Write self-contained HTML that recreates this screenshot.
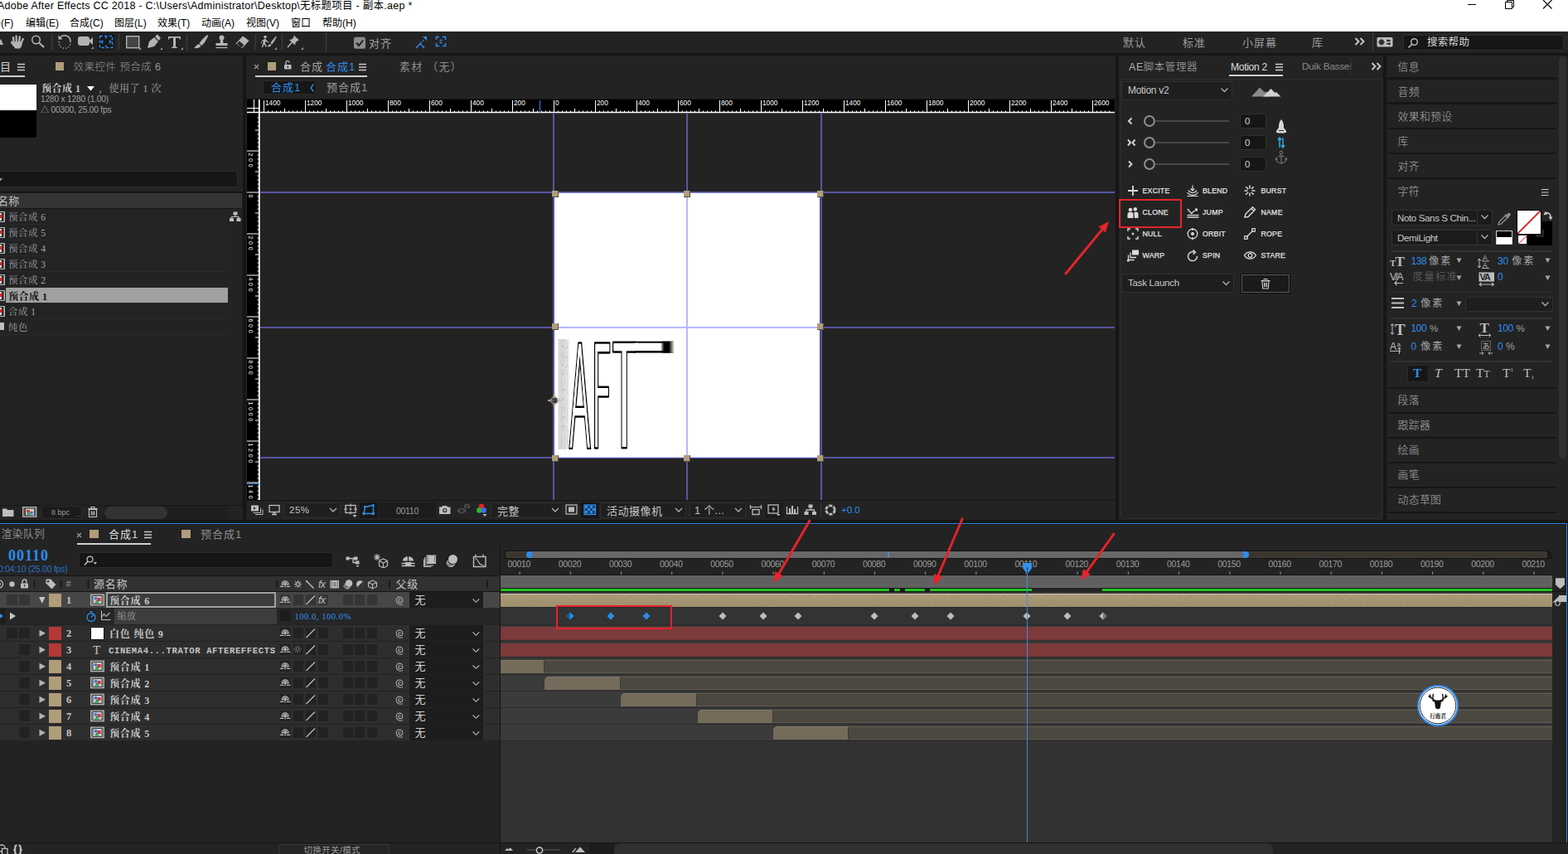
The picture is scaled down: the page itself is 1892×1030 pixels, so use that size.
<!DOCTYPE html>
<html lang="zh-CN"><head><meta charset="utf-8"><title>Adobe After Effects CC 2018</title>
<style>
html,body{margin:0;padding:0;background:#232323;}
#root{position:relative;width:1892px;height:1030px;overflow:hidden;background:#161616;font-family:"Liberation Sans","Noto Sans CJK SC",sans-serif;}
#root div,#root svg{position:absolute;box-sizing:border-box;}
#root .t{white-space:nowrap;line-height:1;}
#root .s{font-family:"Liberation Serif","Noto Serif CJK SC",serif;}
#root .m{font-family:"Liberation Mono","Noto Sans CJK SC",monospace;}
</style></head>
<body><div id="root">
<div style="left:0px;top:0px;width:1892px;height:38px;background:#ffffff;"></div>
<div class="t" style="left:-3px;top:1px;font-size:12.5px;color:#000;line-height:13px;letter-spacing:0.260px;">Adobe After Effects CC 2018 - C:\Users\Administrator\Desktop\无标题项目 - 副本.aep *</div>
<div class="t" style="left:-11px;top:21px;font-size:12px;color:#000;line-height:14px;">件(F)</div>
<div class="t" style="left:31px;top:21px;font-size:12px;color:#000;line-height:14px;">编辑(E)</div>
<div class="t" style="left:84px;top:21px;font-size:12px;color:#000;line-height:14px;">合成(C)</div>
<div class="t" style="left:138px;top:21px;font-size:12px;color:#000;line-height:14px;">图层(L)</div>
<div class="t" style="left:190px;top:21px;font-size:12px;color:#000;line-height:14px;">效果(T)</div>
<div class="t" style="left:243px;top:21px;font-size:12px;color:#000;line-height:14px;">动画(A)</div>
<div class="t" style="left:297px;top:21px;font-size:12px;color:#000;line-height:14px;">视图(V)</div>
<div class="t" style="left:351px;top:21px;font-size:12px;color:#000;line-height:14px;">窗口</div>
<div class="t" style="left:389px;top:21px;font-size:12px;color:#000;line-height:14px;">帮助(H)</div>
<svg style="left:1765px;top:0px;" width="120" height="14" viewBox="0 0 120 14"><path d="M6 5.5H16" stroke="#000" stroke-width="1" fill="none"/><path d="M51.5 2.5H59.5V10.5H51.5Z M53.5 2.5V0.5H61.5V8.5H59.5" stroke="#000" stroke-width="1" fill="none"/><path d="M97 0L107.5 10.5M107.5 0L97 10.5" stroke="#000" stroke-width="1.1" fill="none"/></svg>
<div style="left:0px;top:38px;width:1892px;height:25.5px;background:#232323;"></div>
<svg style="left:0px;top:36.2px;" width="560" height="28" viewBox="0 0 560 28"><path d="M-4 18L1 11L4 18Z" fill="#b4b4b4"/><path d="M16.600 15L15.900 9.200M19.800 14L19.600 7.700M23 14L23.900 8.300M25.700 15.500L27.800 11M16.500 18.500L14 14.800" stroke="#b4b4b4" stroke-width="2.300" stroke-linecap="round" fill="none"/><path d="M15.400 14.200h10.800l.6 1.600c0 3.200-1.300 5.400-2.800 6.700h-5.400c-1.700-1.600-3.200-4.300-3.200-8.300z" fill="#b4b4b4"/><circle cx="43.500" cy="12" r="4.800" fill="none" stroke="#b4b4b4" stroke-width="1.500"/><path d="M47 15.500L53 21" stroke="#b4b4b4" stroke-width="2"/><path d="M62.5 5V24" stroke="#3a3a3a" stroke-width="1.500"/><path d="M72.500 9.500A7 7 0 0 1 85 14" fill="none" stroke="#b4b4b4" stroke-width="1.500"/><path d="M70.500 6.500V11.500H75.500Z" fill="#b4b4b4"/><path d="M85 14A7 7 0 1 1 71.500 13" fill="none" stroke="#b4b4b4" stroke-width="1.300" stroke-dasharray="1.300 2"/><rect x="94" y="8" width="14" height="11" rx="3" fill="#b4b4b4"/><path d="M107 13.500L112 9V18Z" fill="#b4b4b4"/><path d="M110 23L113 20V23Z" fill="#999"/><rect x="117" y="3.500" width="22" height="21.500" rx="3" fill="#161616" stroke="#2c2c2c"/><rect x="120.500" y="7.500" width="15" height="14" fill="none" stroke="#2d8ceb" stroke-width="1.500" stroke-dasharray="3.500 2"/><path d="M126.300 10.300h3.400l-1.700-2zM126.300 18.700h3.400l-1.700 2zM123.500 12.500v4l-2.300-2zM132.500 12.500v4l2.300-2z" fill="#2d8ceb"/><path d="M123.800 12v5M132.200 12v5" stroke="#2d8ceb" stroke-width="0.900"/><path d="M143.500 5V24" stroke="#3a3a3a" stroke-width="1.500"/><rect x="152.700" y="7.700" width="15" height="14" fill="#444" stroke="#b4b4b4" stroke-width="1.400"/><path d="M167 24L170 21V24Z" fill="#999"/><path d="M178 22l2-8 6-5 5 5-5 6z" fill="#b4b4b4"/><path d="M187 8l3-2.500 4 4.500-2.500 3z" fill="#b4b4b4"/><path d="M193 24L196 21V24Z" fill="#999"/><path d="M203 8h15v3.500h-1.200l-.5-1.800h-4.300v10.800l2 .5v1h-7v-1l2-.5V9.700h-4.300l-.5 1.800H203z" fill="#b4b4b4"/><path d="M218 24L221 21V24Z" fill="#999"/><path d="M225.500 5V24" stroke="#3a3a3a" stroke-width="1.500"/><path d="M250.500 6c-4 2.500-8.500 7.500-10 10.500l2.800 2.500c3-2.500 6.500-8 8-12.500z" fill="#b4b4b4"/><path d="M240 17.200c-3 .5-3.500 3-6 4.500 3 1 7 .5 8.500-2.500z" fill="#b4b4b4"/><circle cx="267.500" cy="9.500" r="3" fill="#b4b4b4"/><path d="M266 11h3l.5 5h5v3h-14v-3h5z" fill="#b4b4b4"/><path d="M260.500 21.500h14" stroke="#b4b4b4" stroke-width="1.300"/><path d="M284.500 16.500l8.500-9 7.500 5.500-8 9z" fill="#b4b4b4"/><path d="M285.800 16.800l3-3.200 5.600 4.600-2.600 3z" fill="#232323"/><path d="M308.500 5V24" stroke="#3a3a3a" stroke-width="1.500"/><circle cx="320" cy="8.500" r="1.800" fill="#b4b4b4"/><path d="M316 13l4-2.500 2.500 3 2 1-.5 1-2.500-1-1-1-.5 3 2 3.500-1 .700-2.500-3.500-1.500 4-1.200-.3 1.500-5 .3-3-1.500 1-.5 2.500h-1z" fill="#b4b4b4"/><path d="M334 7c-2.500 2-6 6-7.500 9l1.500 1.500c2-2 5-6.500 6-10.500zM326 17c-1.500.3-2 1.500-3.500 3 2 .5 4 .2 5-1.800z" fill="#b4b4b4"/><path d="M331 24L334 21V24Z" fill="#999"/><path d="M340.500 5V24" stroke="#3a3a3a" stroke-width="1.500"/><path d="M354.500 6.500l6.500 6-2 .5-2.500 2.500-.5 3-7-6.500 3-.5 2.500-2.500z" fill="#b4b4b4"/><path d="M352.500 15L347 21" stroke="#b4b4b4" stroke-width="1.500"/><path d="M363 24L366 21V24Z" fill="#999"/><path d="M393.500 3V26" stroke="#3a3a3a" stroke-width="1.500"/><rect x="427" y="8.800" width="14" height="14" rx="2.500" fill="#8c8c8c"/><path d="M430 15.800l3 3.200 5.200-6.500" fill="none" stroke="#1d1d1d" stroke-width="2"/><path d="M502 22l5-5.500 5 5.500" fill="none" stroke="#2d8ceb" stroke-width="1.400"/><path d="M507.500 16l4.500-4.500" stroke="#2d8ceb" stroke-width="1.300" stroke-dasharray="2 1.500"/><path d="M510 8h5v5z" fill="#2d8ceb"/><path d="M526.500 12V8.500H530M534 8.500h3.500V12M537.500 16v3.500H534M530 19.500h-3.500V16" fill="none" stroke="#2d8ceb" stroke-width="1.500"/><path d="M530.500 12.500h3M530.500 15.500h3" stroke="#2d8ceb" stroke-width="1.300"/></svg>
<div class="t" style="left:445px;top:45.5px;font-size:13px;color:#a4a4a4;letter-spacing:1px;">对齐</div>
<div class="t" style="left:1355px;top:44.7px;font-size:13px;color:#9a9a9a;letter-spacing:1px;">默认</div>
<div class="t" style="left:1427px;top:44.7px;font-size:13px;color:#9a9a9a;letter-spacing:1px;">标准</div>
<div class="t" style="left:1499px;top:44.7px;font-size:13px;color:#9a9a9a;letter-spacing:1px;">小屏幕</div>
<div class="t" style="left:1583px;top:44.7px;font-size:13px;color:#9a9a9a;letter-spacing:1px;">库</div>
<svg style="left:1633px;top:43px;" width="16" height="14" viewBox="0 0 16 14"><path d="M2.500 3l4 4-4 4M8.500 3l4 4-4 4" fill="none" stroke="#c8c8c8" stroke-width="1.900"/></svg>
<div style="left:1656px;top:39px;width:1px;height:24px;background:#3a3a3a;"></div>
<svg style="left:1661px;top:44px;" width="22" height="14" viewBox="0 0 22 14"><rect x="0.500" y="1" width="19" height="11.500" rx="1.500" fill="#bdbdbd"/><circle cx="6" cy="6.800" r="2.200" fill="none" stroke="#232323" stroke-width="1.400"/><path d="M6 2.500v8.500M2 6.800h8M3.200 4l5.600 5.600M8.800 4L3.200 9.600" stroke="#232323" stroke-width="1"/><path d="M12 5h5M12 8.700h5" stroke="#232323" stroke-width="1.500"/><path d="M14 3.500v3M15.500 7.200v3" stroke="#232323" stroke-width="1.200"/></svg>
<div style="left:1693px;top:42px;width:194px;height:19px;background:#161616;border:1px solid #2e2e2e;border-radius:3px;"></div>
<svg style="left:1697px;top:44px;" width="18" height="16" viewBox="0 0 18 16"><circle cx="9.500" cy="6.500" r="3.800" fill="none" stroke="#c0c0c0" stroke-width="1.400"/><path d="M6.800 9.300L2.500 13.500" stroke="#c0c0c0" stroke-width="1.600"/></svg>
<div class="t" style="left:1722px;top:45px;font-size:12.5px;color:#d8d8d8;letter-spacing:0.3px;">搜索帮助</div>
<div style="left:0px;top:67px;width:293px;height:560px;background:#232323;"></div>
<div class="t" style="left:0px;top:74px;font-size:13px;color:#d2d2d2;">目</div>
<svg style="left:20px;top:75px;" width="12" height="12" viewBox="0 0 12 12"><path d="M1 2.500h9M1 6h9M1 9.500h9" stroke="#c8c8c8" stroke-width="1.300"/></svg>
<div style="left:0px;top:90.5px;width:30px;height:2px;background:#cfcfcf;"></div>
<div style="left:67px;top:75px;width:10px;height:10px;background:#b09d7a;"></div>
<div class="t" style="left:88.5px;top:74.5px;font-size:12.5px;color:#989898;letter-spacing:0.450px;font-weight:300;">效果控件 预合成 6</div>
<div style="left:0px;top:102px;width:43.5px;height:30.5px;background:#ffffff;"></div>
<div style="left:0px;top:132.5px;width:43.5px;height:33px;background:#000000;"></div>
<div class="t s" style="left:50px;top:101px;font-size:12px;color:#c8c8c8;font-weight:bold;letter-spacing:0.500px;">预合成 1</div>
<svg style="left:104px;top:103px;" width="12" height="8" viewBox="0 0 12 8"><path d="M1 1h9l-4.500 5.500z" fill="#ffffff"/></svg>
<div class="t s" style="left:119px;top:101px;font-size:12px;color:#a8a8a8;letter-spacing:0.500px;">，使用了 1 次</div>
<div class="t" style="left:49px;top:115px;font-size:10.2px;color:#a0a0a0;letter-spacing:-0.200px;">1280 x 1280 (1.00)</div>
<div class="t" style="left:49px;top:128px;font-size:10.2px;color:#a0a0a0;letter-spacing:-0.200px;">△ 00300, 25.00 fps</div>
<div style="left:-4px;top:206px;width:291px;height:20px;background:#161616;border:1px solid #2c2c2c;border-radius:3px;"></div>
<svg style="left:0px;top:214px;" width="8" height="6" viewBox="0 0 8 6"><path d="M-2 1h5l-2.500 3.500z" fill="#9a9a9a"/></svg>
<div style="left:0px;top:231px;width:293px;height:2px;background:#161616;"></div>
<div style="left:0px;top:233px;width:293px;height:18px;background:#343434;"></div>
<div style="left:0px;top:251px;width:293px;height:1px;background:#161616;"></div>
<div class="t" style="left:-3px;top:235.5px;font-size:13px;color:#c0c0c0;letter-spacing:0.300px;">名称</div>
<div style="left:0px;top:270px;width:275px;height:1px;background:#2a2a2a;"></div>
<svg style="left:-7px;top:255px;" width="13" height="13" viewBox="0 0 13 13"><rect x="0.500" y="0.500" width="12" height="12" fill="#2a2a2a" stroke="#bdbdbd"/><rect x="2" y="2" width="7" height="9" fill="#d8d8d8"/><rect x="6" y="4" width="3.500" height="4" fill="#e02828"/><path d="M11.500 2v9" stroke="#bdbdbd" stroke-dasharray="1 1"/></svg>
<div class="t s" style="left:10px;top:257px;font-size:11.5px;color:#a6a6a6;letter-spacing:0.500px;">预合成 6</div>
<div style="left:0px;top:289px;width:275px;height:1px;background:#2a2a2a;"></div>
<svg style="left:-7px;top:274px;" width="13" height="13" viewBox="0 0 13 13"><rect x="0.500" y="0.500" width="12" height="12" fill="#2a2a2a" stroke="#bdbdbd"/><rect x="2" y="2" width="7" height="9" fill="#d8d8d8"/><rect x="6" y="4" width="3.500" height="4" fill="#e02828"/><path d="M11.500 2v9" stroke="#bdbdbd" stroke-dasharray="1 1"/></svg>
<div class="t s" style="left:10px;top:276px;font-size:11.5px;color:#a6a6a6;letter-spacing:0.500px;">预合成 5</div>
<div style="left:0px;top:308px;width:275px;height:1px;background:#2a2a2a;"></div>
<svg style="left:-7px;top:293px;" width="13" height="13" viewBox="0 0 13 13"><rect x="0.500" y="0.500" width="12" height="12" fill="#2a2a2a" stroke="#bdbdbd"/><rect x="2" y="2" width="7" height="9" fill="#d8d8d8"/><rect x="6" y="4" width="3.500" height="4" fill="#e02828"/><path d="M11.500 2v9" stroke="#bdbdbd" stroke-dasharray="1 1"/></svg>
<div class="t s" style="left:10px;top:295px;font-size:11.5px;color:#a6a6a6;letter-spacing:0.500px;">预合成 4</div>
<div style="left:0px;top:327px;width:275px;height:1px;background:#2a2a2a;"></div>
<svg style="left:-7px;top:312px;" width="13" height="13" viewBox="0 0 13 13"><rect x="0.500" y="0.500" width="12" height="12" fill="#2a2a2a" stroke="#bdbdbd"/><rect x="2" y="2" width="7" height="9" fill="#d8d8d8"/><rect x="6" y="4" width="3.500" height="4" fill="#e02828"/><path d="M11.500 2v9" stroke="#bdbdbd" stroke-dasharray="1 1"/></svg>
<div class="t s" style="left:10px;top:314px;font-size:11.5px;color:#a6a6a6;letter-spacing:0.500px;">预合成 3</div>
<div style="left:0px;top:346px;width:275px;height:1px;background:#2a2a2a;"></div>
<svg style="left:-7px;top:331px;" width="13" height="13" viewBox="0 0 13 13"><rect x="0.500" y="0.500" width="12" height="12" fill="#2a2a2a" stroke="#bdbdbd"/><rect x="2" y="2" width="7" height="9" fill="#d8d8d8"/><rect x="6" y="4" width="3.500" height="4" fill="#e02828"/><path d="M11.500 2v9" stroke="#bdbdbd" stroke-dasharray="1 1"/></svg>
<div class="t s" style="left:10px;top:333px;font-size:11.5px;color:#a6a6a6;letter-spacing:0.500px;">预合成 2</div>
<div style="left:7px;top:343.0px;width:268px;height:18px;background:#a0a0a0;top:347px;"></div>
<div style="left:0px;top:365px;width:275px;height:1px;background:#2a2a2a;"></div>
<svg style="left:-7px;top:350px;" width="13" height="13" viewBox="0 0 13 13"><rect x="0.500" y="0.500" width="12" height="12" fill="#2a2a2a" stroke="#bdbdbd"/><rect x="2" y="2" width="7" height="9" fill="#d8d8d8"/><rect x="6" y="4" width="3.500" height="4" fill="#e02828"/><path d="M11.500 2v9" stroke="#bdbdbd" stroke-dasharray="1 1"/></svg>
<div class="t s" style="left:10px;top:352px;font-size:12px;color:#111;font-weight:bold;letter-spacing:0.500px;">预合成 1</div>
<div style="left:0px;top:384px;width:275px;height:1px;background:#2a2a2a;"></div>
<svg style="left:-7px;top:369px;" width="13" height="13" viewBox="0 0 13 13"><rect x="0.500" y="0.500" width="12" height="12" fill="#2a2a2a" stroke="#bdbdbd"/><rect x="2" y="2" width="7" height="9" fill="#d8d8d8"/><rect x="6" y="4" width="3.500" height="4" fill="#e02828"/><path d="M11.500 2v9" stroke="#bdbdbd" stroke-dasharray="1 1"/></svg>
<div class="t s" style="left:10px;top:371px;font-size:11.5px;color:#a6a6a6;letter-spacing:0.500px;">合成 1</div>
<div style="left:0px;top:403px;width:275px;height:1px;background:#2a2a2a;"></div>
<div style="left:-4px;top:389px;width:9px;height:9px;background:#bdbdbd;"></div>
<div class="t s" style="left:10px;top:390px;font-size:11.5px;color:#a6a6a6;letter-spacing:0.500px;">纯色</div>
<svg style="left:277px;top:255px;" width="14" height="13" viewBox="0 0 14 13"><rect x="4.500" y="0.500" width="5" height="4" fill="#bdbdbd"/><rect x="0" y="8" width="5" height="4" fill="#bdbdbd"/><rect x="8.500" y="8" width="5" height="4" fill="#bdbdbd"/><path d="M7 4.500V6.500M2.500 8V6.500H11V8" fill="none" stroke="#bdbdbd" stroke-width="1.200"/></svg>
<div style="left:292px;top:231px;width:1px;height:378px;background:#1d1d1d;"></div>
<div style="left:0px;top:609px;width:293px;height:1px;background:#161616;"></div>
<svg style="left:2px;top:611px;" width="16" height="13" viewBox="0 0 16 13"><path d="M1 2.500h5l1 1.500h7.500v8H1z" fill="#bdbdbd"/></svg>
<svg style="left:27px;top:610px;" width="18" height="15" viewBox="0 0 18 15"><rect x="0.700" y="1.700" width="16" height="11.500" fill="#2a2a2a" stroke="#bdbdbd" stroke-width="1.300"/><rect x="4" y="3.500" width="10" height="8" fill="#cfcfcf"/><rect x="5" y="5" width="4" height="3.500" fill="#e03030"/><circle cx="11" cy="8.500" r="2" fill="#3a7bd8"/><path d="M4.500 11.500l3-4 3 4z" fill="#3aa04a"/><path d="M2.300 3v9M15 3v9" stroke="#bdbdbd" stroke-width="1" stroke-dasharray="1 1"/></svg>
<div style="left:50px;top:610px;width:49px;height:16px;background:#1b1b1b;border:1px solid #2c2c2c;border-radius:2px;"></div>
<div class="t" style="left:62px;top:614px;font-size:9px;color:#9a9a9a;">8 bpc</div>
<div class="t" style="left:93px;top:616px;font-size:9px;color:#9a9a9a;">.</div>
<svg style="left:105px;top:610px;" width="14" height="15" viewBox="0 0 14 15"><path d="M2.500 4.500h9v9h-9z" fill="none" stroke="#bdbdbd" stroke-width="1.200"/><path d="M1 3.500h12M5 3V1.500h4V3M5.300 6.500v5M7 6.500v5M8.700 6.500v5" stroke="#bdbdbd" stroke-width="1.100" fill="none"/></svg>
<div style="left:125px;top:610px;width:150px;height:17px;background:#1f1f1f;"></div>
<div style="left:126px;top:610.5px;width:76px;height:15px;background:#333333;border-radius:8px;"></div>
<div style="left:275px;top:610px;width:18px;height:17px;background:#232323;"></div>
<div style="left:297px;top:67px;width:1049px;height:560px;background:#232323;"></div>
<svg style="left:306px;top:77px;" width="8" height="8" viewBox="0 0 8 8"><path d="M1 1l5 5M6 1l-5 5" stroke="#9a9a9a" stroke-width="1.100"/></svg>
<div style="left:323px;top:75px;width:10px;height:10px;background:#b09d7a;"></div>
<svg style="left:342px;top:72px;" width="11" height="12" viewBox="0 0 11 12"><rect x="1" y="6" width="8.500" height="5.500" rx="0.800" fill="#bdbdbd"/><path d="M2.800 6V4.200a2.200 2.200 0 0 1 4.400 -0.600" fill="none" stroke="#bdbdbd" stroke-width="1.300"/><rect x="4.700" y="7.500" width="1.300" height="2.500" fill="#232323"/></svg>
<div class="t" style="left:362px;top:74px;font-size:13px;color:#a2a2a2;letter-spacing:1px;">合成</div>
<div class="t" style="left:393px;top:74px;font-size:13px;color:#2d8ceb;letter-spacing:1px;">合成1</div>
<svg style="left:432px;top:75px;" width="12" height="12" viewBox="0 0 12 12"><path d="M1 2.500h9M1 6h9M1 9.500h9" stroke="#c8c8c8" stroke-width="1.300"/></svg>
<div style="left:308px;top:90.5px;width:135px;height:2px;background:#cfcfcf;"></div>
<div class="t" style="left:482px;top:74px;font-size:13px;color:#8c8c8c;letter-spacing:1.200px;">素材 （无）</div>
<div style="left:317px;top:97px;width:65px;height:17px;background:#161616;border:1px solid #2a2a2a;border-radius:3px;"></div>
<div class="t" style="left:327px;top:99px;font-size:13px;color:#2d8ceb;letter-spacing:1px;">合成1</div>
<svg style="left:373px;top:100px;" width="8" height="12" viewBox="0 0 8 12"><path d="M5.500 1.500L2 6l3.500 4.500" fill="none" stroke="#2d8ceb" stroke-width="1.300"/></svg>
<div class="t" style="left:394px;top:99px;font-size:13px;color:#9a9a9a;letter-spacing:1px;">预合成1</div>
<div style="left:297px;top:119px;width:1049px;height:1px;background:#161616;"></div>
<div style="left:298px;top:120px;width:1047px;height:16px;background:#000;"></div>
<div style="left:298px;top:136px;width:15px;height:467px;background:#000;"></div>
<svg style="left:298px;top:120px;" width="1047" height="17" viewBox="0 0 1047 17"><path d="M20.5 1V16" stroke="#fff" stroke-width="1"/><text x="22.0" y="6.800" font-size="9" fill="#fff" font-family="Liberation Sans, sans-serif" textLength="18.4" lengthAdjust="spacingAndGlyphs">1400</text><path d="M25.5 13.500V16" stroke="#fff" stroke-width="1"/><path d="M30.5 13.500V16" stroke="#fff" stroke-width="1"/><path d="M35.5 13.500V16" stroke="#fff" stroke-width="1"/><path d="M40.5 13.500V16" stroke="#fff" stroke-width="1"/><path d="M45.5 11V16" stroke="#fff" stroke-width="1"/><path d="M50.5 13.500V16" stroke="#fff" stroke-width="1"/><path d="M55.5 13.500V16" stroke="#fff" stroke-width="1"/><path d="M60.5 13.500V16" stroke="#fff" stroke-width="1"/><path d="M65.5 13.500V16" stroke="#fff" stroke-width="1"/><path d="M70.5 1V16" stroke="#fff" stroke-width="1"/><text x="72.0" y="6.800" font-size="9" fill="#fff" font-family="Liberation Sans, sans-serif" textLength="18.4" lengthAdjust="spacingAndGlyphs">1200</text><path d="M75.5 13.500V16" stroke="#fff" stroke-width="1"/><path d="M80.5 13.500V16" stroke="#fff" stroke-width="1"/><path d="M85.5 13.500V16" stroke="#fff" stroke-width="1"/><path d="M90.5 13.500V16" stroke="#fff" stroke-width="1"/><path d="M95.5 11V16" stroke="#fff" stroke-width="1"/><path d="M100.5 13.500V16" stroke="#fff" stroke-width="1"/><path d="M105.5 13.500V16" stroke="#fff" stroke-width="1"/><path d="M110.5 13.500V16" stroke="#fff" stroke-width="1"/><path d="M115.5 13.500V16" stroke="#fff" stroke-width="1"/><path d="M120.5 1V16" stroke="#fff" stroke-width="1"/><text x="122.0" y="6.800" font-size="9" fill="#fff" font-family="Liberation Sans, sans-serif" textLength="18.4" lengthAdjust="spacingAndGlyphs">1000</text><path d="M125.5 13.500V16" stroke="#fff" stroke-width="1"/><path d="M130.5 13.500V16" stroke="#fff" stroke-width="1"/><path d="M135.5 13.500V16" stroke="#fff" stroke-width="1"/><path d="M140.5 13.500V16" stroke="#fff" stroke-width="1"/><path d="M145.5 11V16" stroke="#fff" stroke-width="1"/><path d="M150.5 13.500V16" stroke="#fff" stroke-width="1"/><path d="M155.5 13.500V16" stroke="#fff" stroke-width="1"/><path d="M160.5 13.500V16" stroke="#fff" stroke-width="1"/><path d="M165.5 13.500V16" stroke="#fff" stroke-width="1"/><path d="M170.5 1V16" stroke="#fff" stroke-width="1"/><text x="172.0" y="6.800" font-size="9" fill="#fff" font-family="Liberation Sans, sans-serif" textLength="13.8" lengthAdjust="spacingAndGlyphs">800</text><path d="M175.5 13.500V16" stroke="#fff" stroke-width="1"/><path d="M180.5 13.500V16" stroke="#fff" stroke-width="1"/><path d="M185.5 13.500V16" stroke="#fff" stroke-width="1"/><path d="M190.5 13.500V16" stroke="#fff" stroke-width="1"/><path d="M195.5 11V16" stroke="#fff" stroke-width="1"/><path d="M200.5 13.500V16" stroke="#fff" stroke-width="1"/><path d="M205.5 13.500V16" stroke="#fff" stroke-width="1"/><path d="M210.5 13.500V16" stroke="#fff" stroke-width="1"/><path d="M215.5 13.500V16" stroke="#fff" stroke-width="1"/><path d="M220.5 1V16" stroke="#fff" stroke-width="1"/><text x="222.0" y="6.800" font-size="9" fill="#fff" font-family="Liberation Sans, sans-serif" textLength="13.8" lengthAdjust="spacingAndGlyphs">600</text><path d="M225.5 13.500V16" stroke="#fff" stroke-width="1"/><path d="M230.5 13.500V16" stroke="#fff" stroke-width="1"/><path d="M235.5 13.500V16" stroke="#fff" stroke-width="1"/><path d="M240.5 13.500V16" stroke="#fff" stroke-width="1"/><path d="M245.5 11V16" stroke="#fff" stroke-width="1"/><path d="M250.5 13.500V16" stroke="#fff" stroke-width="1"/><path d="M255.5 13.500V16" stroke="#fff" stroke-width="1"/><path d="M260.5 13.500V16" stroke="#fff" stroke-width="1"/><path d="M265.5 13.500V16" stroke="#fff" stroke-width="1"/><path d="M270.5 1V16" stroke="#fff" stroke-width="1"/><text x="272.0" y="6.800" font-size="9" fill="#fff" font-family="Liberation Sans, sans-serif" textLength="13.8" lengthAdjust="spacingAndGlyphs">400</text><path d="M275.5 13.500V16" stroke="#fff" stroke-width="1"/><path d="M280.5 13.500V16" stroke="#fff" stroke-width="1"/><path d="M285.5 13.500V16" stroke="#fff" stroke-width="1"/><path d="M290.5 13.500V16" stroke="#fff" stroke-width="1"/><path d="M295.5 11V16" stroke="#fff" stroke-width="1"/><path d="M300.5 13.500V16" stroke="#fff" stroke-width="1"/><path d="M305.5 13.500V16" stroke="#fff" stroke-width="1"/><path d="M310.5 13.500V16" stroke="#fff" stroke-width="1"/><path d="M315.5 13.500V16" stroke="#fff" stroke-width="1"/><path d="M320.5 1V16" stroke="#fff" stroke-width="1"/><text x="322.0" y="6.800" font-size="9" fill="#fff" font-family="Liberation Sans, sans-serif" textLength="13.8" lengthAdjust="spacingAndGlyphs">200</text><path d="M325.5 13.500V16" stroke="#fff" stroke-width="1"/><path d="M330.5 13.500V16" stroke="#fff" stroke-width="1"/><path d="M335.5 13.500V16" stroke="#fff" stroke-width="1"/><path d="M340.5 13.500V16" stroke="#fff" stroke-width="1"/><path d="M345.5 11V16" stroke="#fff" stroke-width="1"/><path d="M350.5 13.500V16" stroke="#fff" stroke-width="1"/><path d="M355.5 13.500V16" stroke="#fff" stroke-width="1"/><path d="M360.5 13.500V16" stroke="#fff" stroke-width="1"/><path d="M365.5 13.500V16" stroke="#fff" stroke-width="1"/><path d="M370.5 1V16" stroke="#fff" stroke-width="1"/><text x="372.0" y="6.800" font-size="9" fill="#fff" font-family="Liberation Sans, sans-serif" textLength="4.6" lengthAdjust="spacingAndGlyphs">0</text><path d="M375.5 13.500V16" stroke="#fff" stroke-width="1"/><path d="M380.5 13.500V16" stroke="#fff" stroke-width="1"/><path d="M385.5 13.500V16" stroke="#fff" stroke-width="1"/><path d="M390.5 13.500V16" stroke="#fff" stroke-width="1"/><path d="M395.5 11V16" stroke="#fff" stroke-width="1"/><path d="M400.5 13.500V16" stroke="#fff" stroke-width="1"/><path d="M405.5 13.500V16" stroke="#fff" stroke-width="1"/><path d="M410.5 13.500V16" stroke="#fff" stroke-width="1"/><path d="M415.5 13.500V16" stroke="#fff" stroke-width="1"/><path d="M420.5 1V16" stroke="#fff" stroke-width="1"/><text x="422.0" y="6.800" font-size="9" fill="#fff" font-family="Liberation Sans, sans-serif" textLength="13.8" lengthAdjust="spacingAndGlyphs">200</text><path d="M425.5 13.500V16" stroke="#fff" stroke-width="1"/><path d="M430.5 13.500V16" stroke="#fff" stroke-width="1"/><path d="M435.5 13.500V16" stroke="#fff" stroke-width="1"/><path d="M440.5 13.500V16" stroke="#fff" stroke-width="1"/><path d="M445.5 11V16" stroke="#fff" stroke-width="1"/><path d="M450.5 13.500V16" stroke="#fff" stroke-width="1"/><path d="M455.5 13.500V16" stroke="#fff" stroke-width="1"/><path d="M460.5 13.500V16" stroke="#fff" stroke-width="1"/><path d="M465.5 13.500V16" stroke="#fff" stroke-width="1"/><path d="M470.5 1V16" stroke="#fff" stroke-width="1"/><text x="472.0" y="6.800" font-size="9" fill="#fff" font-family="Liberation Sans, sans-serif" textLength="13.8" lengthAdjust="spacingAndGlyphs">400</text><path d="M475.5 13.500V16" stroke="#fff" stroke-width="1"/><path d="M480.5 13.500V16" stroke="#fff" stroke-width="1"/><path d="M485.5 13.500V16" stroke="#fff" stroke-width="1"/><path d="M490.5 13.500V16" stroke="#fff" stroke-width="1"/><path d="M495.5 11V16" stroke="#fff" stroke-width="1"/><path d="M500.5 13.500V16" stroke="#fff" stroke-width="1"/><path d="M505.5 13.500V16" stroke="#fff" stroke-width="1"/><path d="M510.5 13.500V16" stroke="#fff" stroke-width="1"/><path d="M515.5 13.500V16" stroke="#fff" stroke-width="1"/><path d="M520.5 1V16" stroke="#fff" stroke-width="1"/><text x="522.0" y="6.800" font-size="9" fill="#fff" font-family="Liberation Sans, sans-serif" textLength="13.8" lengthAdjust="spacingAndGlyphs">600</text><path d="M525.5 13.500V16" stroke="#fff" stroke-width="1"/><path d="M530.5 13.500V16" stroke="#fff" stroke-width="1"/><path d="M535.5 13.500V16" stroke="#fff" stroke-width="1"/><path d="M540.5 13.500V16" stroke="#fff" stroke-width="1"/><path d="M545.5 11V16" stroke="#fff" stroke-width="1"/><path d="M550.5 13.500V16" stroke="#fff" stroke-width="1"/><path d="M555.5 13.500V16" stroke="#fff" stroke-width="1"/><path d="M560.5 13.500V16" stroke="#fff" stroke-width="1"/><path d="M565.5 13.500V16" stroke="#fff" stroke-width="1"/><path d="M570.5 1V16" stroke="#fff" stroke-width="1"/><text x="572.0" y="6.800" font-size="9" fill="#fff" font-family="Liberation Sans, sans-serif" textLength="13.8" lengthAdjust="spacingAndGlyphs">800</text><path d="M575.5 13.500V16" stroke="#fff" stroke-width="1"/><path d="M580.5 13.500V16" stroke="#fff" stroke-width="1"/><path d="M585.5 13.500V16" stroke="#fff" stroke-width="1"/><path d="M590.5 13.500V16" stroke="#fff" stroke-width="1"/><path d="M595.5 11V16" stroke="#fff" stroke-width="1"/><path d="M600.5 13.500V16" stroke="#fff" stroke-width="1"/><path d="M605.5 13.500V16" stroke="#fff" stroke-width="1"/><path d="M610.5 13.500V16" stroke="#fff" stroke-width="1"/><path d="M615.5 13.500V16" stroke="#fff" stroke-width="1"/><path d="M620.5 1V16" stroke="#fff" stroke-width="1"/><text x="622.0" y="6.800" font-size="9" fill="#fff" font-family="Liberation Sans, sans-serif" textLength="18.4" lengthAdjust="spacingAndGlyphs">1000</text><path d="M625.5 13.500V16" stroke="#fff" stroke-width="1"/><path d="M630.5 13.500V16" stroke="#fff" stroke-width="1"/><path d="M635.5 13.500V16" stroke="#fff" stroke-width="1"/><path d="M640.5 13.500V16" stroke="#fff" stroke-width="1"/><path d="M645.5 11V16" stroke="#fff" stroke-width="1"/><path d="M650.5 13.500V16" stroke="#fff" stroke-width="1"/><path d="M655.5 13.500V16" stroke="#fff" stroke-width="1"/><path d="M660.5 13.500V16" stroke="#fff" stroke-width="1"/><path d="M665.5 13.500V16" stroke="#fff" stroke-width="1"/><path d="M670.5 1V16" stroke="#fff" stroke-width="1"/><text x="672.0" y="6.800" font-size="9" fill="#fff" font-family="Liberation Sans, sans-serif" textLength="18.4" lengthAdjust="spacingAndGlyphs">1200</text><path d="M675.5 13.500V16" stroke="#fff" stroke-width="1"/><path d="M680.5 13.500V16" stroke="#fff" stroke-width="1"/><path d="M685.5 13.500V16" stroke="#fff" stroke-width="1"/><path d="M690.5 13.500V16" stroke="#fff" stroke-width="1"/><path d="M695.5 11V16" stroke="#fff" stroke-width="1"/><path d="M700.5 13.500V16" stroke="#fff" stroke-width="1"/><path d="M705.5 13.500V16" stroke="#fff" stroke-width="1"/><path d="M710.5 13.500V16" stroke="#fff" stroke-width="1"/><path d="M715.5 13.500V16" stroke="#fff" stroke-width="1"/><path d="M720.5 1V16" stroke="#fff" stroke-width="1"/><text x="722.0" y="6.800" font-size="9" fill="#fff" font-family="Liberation Sans, sans-serif" textLength="18.4" lengthAdjust="spacingAndGlyphs">1400</text><path d="M725.5 13.500V16" stroke="#fff" stroke-width="1"/><path d="M730.5 13.500V16" stroke="#fff" stroke-width="1"/><path d="M735.5 13.500V16" stroke="#fff" stroke-width="1"/><path d="M740.5 13.500V16" stroke="#fff" stroke-width="1"/><path d="M745.5 11V16" stroke="#fff" stroke-width="1"/><path d="M750.5 13.500V16" stroke="#fff" stroke-width="1"/><path d="M755.5 13.500V16" stroke="#fff" stroke-width="1"/><path d="M760.5 13.500V16" stroke="#fff" stroke-width="1"/><path d="M765.5 13.500V16" stroke="#fff" stroke-width="1"/><path d="M770.5 1V16" stroke="#fff" stroke-width="1"/><text x="772.0" y="6.800" font-size="9" fill="#fff" font-family="Liberation Sans, sans-serif" textLength="18.4" lengthAdjust="spacingAndGlyphs">1600</text><path d="M775.5 13.500V16" stroke="#fff" stroke-width="1"/><path d="M780.5 13.500V16" stroke="#fff" stroke-width="1"/><path d="M785.5 13.500V16" stroke="#fff" stroke-width="1"/><path d="M790.5 13.500V16" stroke="#fff" stroke-width="1"/><path d="M795.5 11V16" stroke="#fff" stroke-width="1"/><path d="M800.5 13.500V16" stroke="#fff" stroke-width="1"/><path d="M805.5 13.500V16" stroke="#fff" stroke-width="1"/><path d="M810.5 13.500V16" stroke="#fff" stroke-width="1"/><path d="M815.5 13.500V16" stroke="#fff" stroke-width="1"/><path d="M820.5 1V16" stroke="#fff" stroke-width="1"/><text x="822.0" y="6.800" font-size="9" fill="#fff" font-family="Liberation Sans, sans-serif" textLength="18.4" lengthAdjust="spacingAndGlyphs">1800</text><path d="M825.5 13.500V16" stroke="#fff" stroke-width="1"/><path d="M830.5 13.500V16" stroke="#fff" stroke-width="1"/><path d="M835.5 13.500V16" stroke="#fff" stroke-width="1"/><path d="M840.5 13.500V16" stroke="#fff" stroke-width="1"/><path d="M845.5 11V16" stroke="#fff" stroke-width="1"/><path d="M850.5 13.500V16" stroke="#fff" stroke-width="1"/><path d="M855.5 13.500V16" stroke="#fff" stroke-width="1"/><path d="M860.5 13.500V16" stroke="#fff" stroke-width="1"/><path d="M865.5 13.500V16" stroke="#fff" stroke-width="1"/><path d="M870.5 1V16" stroke="#fff" stroke-width="1"/><text x="872.0" y="6.800" font-size="9" fill="#fff" font-family="Liberation Sans, sans-serif" textLength="18.4" lengthAdjust="spacingAndGlyphs">2000</text><path d="M875.5 13.500V16" stroke="#fff" stroke-width="1"/><path d="M880.5 13.500V16" stroke="#fff" stroke-width="1"/><path d="M885.5 13.500V16" stroke="#fff" stroke-width="1"/><path d="M890.5 13.500V16" stroke="#fff" stroke-width="1"/><path d="M895.5 11V16" stroke="#fff" stroke-width="1"/><path d="M900.5 13.500V16" stroke="#fff" stroke-width="1"/><path d="M905.5 13.500V16" stroke="#fff" stroke-width="1"/><path d="M910.5 13.500V16" stroke="#fff" stroke-width="1"/><path d="M915.5 13.500V16" stroke="#fff" stroke-width="1"/><path d="M920.5 1V16" stroke="#fff" stroke-width="1"/><text x="922.0" y="6.800" font-size="9" fill="#fff" font-family="Liberation Sans, sans-serif" textLength="18.4" lengthAdjust="spacingAndGlyphs">2200</text><path d="M925.5 13.500V16" stroke="#fff" stroke-width="1"/><path d="M930.5 13.500V16" stroke="#fff" stroke-width="1"/><path d="M935.5 13.500V16" stroke="#fff" stroke-width="1"/><path d="M940.5 13.500V16" stroke="#fff" stroke-width="1"/><path d="M945.5 11V16" stroke="#fff" stroke-width="1"/><path d="M950.5 13.500V16" stroke="#fff" stroke-width="1"/><path d="M955.5 13.500V16" stroke="#fff" stroke-width="1"/><path d="M960.5 13.500V16" stroke="#fff" stroke-width="1"/><path d="M965.5 13.500V16" stroke="#fff" stroke-width="1"/><path d="M970.5 1V16" stroke="#fff" stroke-width="1"/><text x="972.0" y="6.800" font-size="9" fill="#fff" font-family="Liberation Sans, sans-serif" textLength="18.4" lengthAdjust="spacingAndGlyphs">2400</text><path d="M975.5 13.500V16" stroke="#fff" stroke-width="1"/><path d="M980.5 13.500V16" stroke="#fff" stroke-width="1"/><path d="M985.5 13.500V16" stroke="#fff" stroke-width="1"/><path d="M990.5 13.500V16" stroke="#fff" stroke-width="1"/><path d="M995.5 11V16" stroke="#fff" stroke-width="1"/><path d="M1000.5 13.500V16" stroke="#fff" stroke-width="1"/><path d="M1005.5 13.500V16" stroke="#fff" stroke-width="1"/><path d="M1010.5 13.500V16" stroke="#fff" stroke-width="1"/><path d="M1015.5 13.500V16" stroke="#fff" stroke-width="1"/><path d="M1020.5 1V16" stroke="#fff" stroke-width="1"/><text x="1022.0" y="6.800" font-size="9" fill="#fff" font-family="Liberation Sans, sans-serif" textLength="18.4" lengthAdjust="spacingAndGlyphs">2600</text><path d="M1025.5 13.500V16" stroke="#fff" stroke-width="1"/><path d="M1030.5 13.500V16" stroke="#fff" stroke-width="1"/><path d="M1035.5 13.500V16" stroke="#fff" stroke-width="1"/><path d="M1040.5 13.500V16" stroke="#fff" stroke-width="1"/><path d="M0 10.500H14M8.500 0V15" stroke="#fff" stroke-width="1"/><path d="M0 15.500H1047" stroke="#fff" stroke-width="1.600"/><path d="M14.800 0V16" stroke="#fff" stroke-width="1.800"/><path d="M353.5 1V16" stroke="#2d8ceb" stroke-width="1"/></svg>
<svg style="left:298px;top:136px;" width="16" height="467" viewBox="0 0 16 467"><path d="M12.500 6.0H15" stroke="#fff" stroke-width="1"/><path d="M12.500 11.0H15" stroke="#fff" stroke-width="1"/><path d="M12.500 16.0H15" stroke="#fff" stroke-width="1"/><path d="M10 21.0H15" stroke="#fff" stroke-width="1"/><path d="M12.500 26.0H15" stroke="#fff" stroke-width="1"/><path d="M12.500 31.0H15" stroke="#fff" stroke-width="1"/><path d="M12.500 36.0H15" stroke="#fff" stroke-width="1"/><path d="M12.500 41.0H15" stroke="#fff" stroke-width="1"/><path d="M0 46.0H15" stroke="#fff" stroke-width="1"/><text transform="translate(1.500,48.5) rotate(90) scale(1,1.050)" font-size="7" fill="#fff" font-family="Liberation Sans, sans-serif">2</text><text transform="translate(1.500,55.1) rotate(90) scale(1,1.050)" font-size="7" fill="#fff" font-family="Liberation Sans, sans-serif">0</text><text transform="translate(1.500,61.7) rotate(90) scale(1,1.050)" font-size="7" fill="#fff" font-family="Liberation Sans, sans-serif">0</text><path d="M12.500 51.0H15" stroke="#fff" stroke-width="1"/><path d="M12.500 56.0H15" stroke="#fff" stroke-width="1"/><path d="M12.500 61.0H15" stroke="#fff" stroke-width="1"/><path d="M12.500 66.0H15" stroke="#fff" stroke-width="1"/><path d="M10 71.0H15" stroke="#fff" stroke-width="1"/><path d="M12.500 76.0H15" stroke="#fff" stroke-width="1"/><path d="M12.500 81.0H15" stroke="#fff" stroke-width="1"/><path d="M12.500 86.0H15" stroke="#fff" stroke-width="1"/><path d="M12.500 91.0H15" stroke="#fff" stroke-width="1"/><path d="M0 96.0H15" stroke="#fff" stroke-width="1"/><text transform="translate(1.500,98.5) rotate(90) scale(1,1.050)" font-size="7" fill="#fff" font-family="Liberation Sans, sans-serif">0</text><path d="M12.500 101.0H15" stroke="#fff" stroke-width="1"/><path d="M12.500 106.0H15" stroke="#fff" stroke-width="1"/><path d="M12.500 111.0H15" stroke="#fff" stroke-width="1"/><path d="M12.500 116.0H15" stroke="#fff" stroke-width="1"/><path d="M10 121.0H15" stroke="#fff" stroke-width="1"/><path d="M12.500 126.0H15" stroke="#fff" stroke-width="1"/><path d="M12.500 131.0H15" stroke="#fff" stroke-width="1"/><path d="M12.500 136.0H15" stroke="#fff" stroke-width="1"/><path d="M12.500 141.0H15" stroke="#fff" stroke-width="1"/><path d="M0 146.0H15" stroke="#fff" stroke-width="1"/><text transform="translate(1.500,148.5) rotate(90) scale(1,1.050)" font-size="7" fill="#fff" font-family="Liberation Sans, sans-serif">2</text><text transform="translate(1.500,155.1) rotate(90) scale(1,1.050)" font-size="7" fill="#fff" font-family="Liberation Sans, sans-serif">0</text><text transform="translate(1.500,161.7) rotate(90) scale(1,1.050)" font-size="7" fill="#fff" font-family="Liberation Sans, sans-serif">0</text><path d="M12.500 151.0H15" stroke="#fff" stroke-width="1"/><path d="M12.500 156.0H15" stroke="#fff" stroke-width="1"/><path d="M12.500 161.0H15" stroke="#fff" stroke-width="1"/><path d="M12.500 166.0H15" stroke="#fff" stroke-width="1"/><path d="M10 171.0H15" stroke="#fff" stroke-width="1"/><path d="M12.500 176.0H15" stroke="#fff" stroke-width="1"/><path d="M12.500 181.0H15" stroke="#fff" stroke-width="1"/><path d="M12.500 186.0H15" stroke="#fff" stroke-width="1"/><path d="M12.500 191.0H15" stroke="#fff" stroke-width="1"/><path d="M0 196.0H15" stroke="#fff" stroke-width="1"/><text transform="translate(1.500,198.5) rotate(90) scale(1,1.050)" font-size="7" fill="#fff" font-family="Liberation Sans, sans-serif">4</text><text transform="translate(1.500,205.1) rotate(90) scale(1,1.050)" font-size="7" fill="#fff" font-family="Liberation Sans, sans-serif">0</text><text transform="translate(1.500,211.7) rotate(90) scale(1,1.050)" font-size="7" fill="#fff" font-family="Liberation Sans, sans-serif">0</text><path d="M12.500 201.0H15" stroke="#fff" stroke-width="1"/><path d="M12.500 206.0H15" stroke="#fff" stroke-width="1"/><path d="M12.500 211.0H15" stroke="#fff" stroke-width="1"/><path d="M12.500 216.0H15" stroke="#fff" stroke-width="1"/><path d="M10 221.0H15" stroke="#fff" stroke-width="1"/><path d="M12.500 226.0H15" stroke="#fff" stroke-width="1"/><path d="M12.500 231.0H15" stroke="#fff" stroke-width="1"/><path d="M12.500 236.0H15" stroke="#fff" stroke-width="1"/><path d="M12.500 241.0H15" stroke="#fff" stroke-width="1"/><path d="M0 246.0H15" stroke="#fff" stroke-width="1"/><text transform="translate(1.500,248.5) rotate(90) scale(1,1.050)" font-size="7" fill="#fff" font-family="Liberation Sans, sans-serif">6</text><text transform="translate(1.500,255.1) rotate(90) scale(1,1.050)" font-size="7" fill="#fff" font-family="Liberation Sans, sans-serif">0</text><text transform="translate(1.500,261.7) rotate(90) scale(1,1.050)" font-size="7" fill="#fff" font-family="Liberation Sans, sans-serif">0</text><path d="M12.500 251.0H15" stroke="#fff" stroke-width="1"/><path d="M12.500 256.0H15" stroke="#fff" stroke-width="1"/><path d="M12.500 261.0H15" stroke="#fff" stroke-width="1"/><path d="M12.500 266.0H15" stroke="#fff" stroke-width="1"/><path d="M10 271.0H15" stroke="#fff" stroke-width="1"/><path d="M12.500 276.0H15" stroke="#fff" stroke-width="1"/><path d="M12.500 281.0H15" stroke="#fff" stroke-width="1"/><path d="M12.500 286.0H15" stroke="#fff" stroke-width="1"/><path d="M12.500 291.0H15" stroke="#fff" stroke-width="1"/><path d="M0 296.0H15" stroke="#fff" stroke-width="1"/><text transform="translate(1.500,298.5) rotate(90) scale(1,1.050)" font-size="7" fill="#fff" font-family="Liberation Sans, sans-serif">8</text><text transform="translate(1.500,305.1) rotate(90) scale(1,1.050)" font-size="7" fill="#fff" font-family="Liberation Sans, sans-serif">0</text><text transform="translate(1.500,311.7) rotate(90) scale(1,1.050)" font-size="7" fill="#fff" font-family="Liberation Sans, sans-serif">0</text><path d="M12.500 301.0H15" stroke="#fff" stroke-width="1"/><path d="M12.500 306.0H15" stroke="#fff" stroke-width="1"/><path d="M12.500 311.0H15" stroke="#fff" stroke-width="1"/><path d="M12.500 316.0H15" stroke="#fff" stroke-width="1"/><path d="M10 321.0H15" stroke="#fff" stroke-width="1"/><path d="M12.500 326.0H15" stroke="#fff" stroke-width="1"/><path d="M12.500 331.0H15" stroke="#fff" stroke-width="1"/><path d="M12.500 336.0H15" stroke="#fff" stroke-width="1"/><path d="M12.500 341.0H15" stroke="#fff" stroke-width="1"/><path d="M0 346.0H15" stroke="#fff" stroke-width="1"/><text transform="translate(1.500,348.5) rotate(90) scale(1,1.050)" font-size="7" fill="#fff" font-family="Liberation Sans, sans-serif">1</text><text transform="translate(1.500,355.1) rotate(90) scale(1,1.050)" font-size="7" fill="#fff" font-family="Liberation Sans, sans-serif">0</text><text transform="translate(1.500,361.7) rotate(90) scale(1,1.050)" font-size="7" fill="#fff" font-family="Liberation Sans, sans-serif">0</text><text transform="translate(1.500,368.3) rotate(90) scale(1,1.050)" font-size="7" fill="#fff" font-family="Liberation Sans, sans-serif">0</text><path d="M12.500 351.0H15" stroke="#fff" stroke-width="1"/><path d="M12.500 356.0H15" stroke="#fff" stroke-width="1"/><path d="M12.500 361.0H15" stroke="#fff" stroke-width="1"/><path d="M12.500 366.0H15" stroke="#fff" stroke-width="1"/><path d="M10 371.0H15" stroke="#fff" stroke-width="1"/><path d="M12.500 376.0H15" stroke="#fff" stroke-width="1"/><path d="M12.500 381.0H15" stroke="#fff" stroke-width="1"/><path d="M12.500 386.0H15" stroke="#fff" stroke-width="1"/><path d="M12.500 391.0H15" stroke="#fff" stroke-width="1"/><path d="M0 396.0H15" stroke="#fff" stroke-width="1"/><text transform="translate(1.500,398.5) rotate(90) scale(1,1.050)" font-size="7" fill="#fff" font-family="Liberation Sans, sans-serif">1</text><text transform="translate(1.500,405.1) rotate(90) scale(1,1.050)" font-size="7" fill="#fff" font-family="Liberation Sans, sans-serif">2</text><text transform="translate(1.500,411.7) rotate(90) scale(1,1.050)" font-size="7" fill="#fff" font-family="Liberation Sans, sans-serif">0</text><text transform="translate(1.500,418.3) rotate(90) scale(1,1.050)" font-size="7" fill="#fff" font-family="Liberation Sans, sans-serif">0</text><path d="M12.500 401.0H15" stroke="#fff" stroke-width="1"/><path d="M12.500 406.0H15" stroke="#fff" stroke-width="1"/><path d="M12.500 411.0H15" stroke="#fff" stroke-width="1"/><path d="M12.500 416.0H15" stroke="#fff" stroke-width="1"/><path d="M10 421.0H15" stroke="#fff" stroke-width="1"/><path d="M12.500 426.0H15" stroke="#fff" stroke-width="1"/><path d="M12.500 431.0H15" stroke="#fff" stroke-width="1"/><path d="M12.500 436.0H15" stroke="#fff" stroke-width="1"/><path d="M12.500 441.0H15" stroke="#fff" stroke-width="1"/><path d="M0 446.0H15" stroke="#fff" stroke-width="1"/><text transform="translate(1.500,448.5) rotate(90) scale(1,1.050)" font-size="7" fill="#fff" font-family="Liberation Sans, sans-serif">1</text><text transform="translate(1.500,455.1) rotate(90) scale(1,1.050)" font-size="7" fill="#fff" font-family="Liberation Sans, sans-serif">4</text><text transform="translate(1.500,461.7) rotate(90) scale(1,1.050)" font-size="7" fill="#fff" font-family="Liberation Sans, sans-serif">0</text><text transform="translate(1.500,468.3) rotate(90) scale(1,1.050)" font-size="7" fill="#fff" font-family="Liberation Sans, sans-serif">0</text><path d="M12.500 451.0H15" stroke="#fff" stroke-width="1"/><path d="M12.500 456.0H15" stroke="#fff" stroke-width="1"/><path d="M12.500 461.0H15" stroke="#fff" stroke-width="1"/><path d="M12.500 466.0H15" stroke="#fff" stroke-width="1"/><path d="M14.800 0V467" stroke="#fff" stroke-width="1.800"/><path d="M0 447.5H15" stroke="#2d8ceb" stroke-width="1"/></svg>
<div style="left:667px;top:137px;width:2px;height:466px;background:#5555a2;"></div>
<div style="left:828px;top:137px;width:2px;height:466px;background:#5555a2;"></div>
<div style="left:990px;top:137px;width:2px;height:466px;background:#5555a2;"></div>
<div style="left:314px;top:231px;width:1031px;height:2px;background:#5555a2;"></div>
<div style="left:314px;top:394px;width:1031px;height:2px;background:#5555a2;"></div>
<div style="left:314px;top:551px;width:1031px;height:2px;background:#5555a2;"></div>
<div style="left:669px;top:233px;width:321px;height:319px;background:#ffffff;"></div>
<div style="left:828px;top:233px;width:2px;height:319px;background:#b8b8ff;"></div>
<div style="left:669px;top:394px;width:321px;height:2px;background:#b8b8ff;"></div>
<div style="left:669px;top:551px;width:321px;height:1px;background:#c8c8ff;"></div>
<div style="left:669px;top:232px;width:321px;height:1px;background:#8080c0;"></div>
<div style="left:989px;top:233px;width:2px;height:319px;background:#4a4a90;"></div>
<svg style="left:669px;top:409px;" width="160" height="140" viewBox="0 0 160 140"><defs><linearGradient id="gb2" x1="0" x2="1"><stop offset="0" stop-color="#000" stop-opacity="0"/><stop offset="0.250" stop-color="#000"/><stop offset="0.600" stop-color="#000"/><stop offset="1" stop-color="#fff"/></linearGradient><linearGradient id="gg" x1="0" x2="1"><stop offset="0" stop-color="#e6e6e6"/><stop offset="0.300" stop-color="#d6d6d6"/><stop offset="0.700" stop-color="#e2e2e2"/><stop offset="1" stop-color="#f0f0f0"/></linearGradient></defs><rect x="4" y="0" width="14" height="133" fill="url(#gg)"/><path d="M6.500 0V133M9.500 2V131M12.500 0V133M15.500 3V131" stroke="#c4c4c4" stroke-width="0.600" stroke-dasharray="9 2 20 3"/><path d="M10 8v40M11 60v50M14 10v30" stroke="#999" stroke-width="0.700" stroke-dasharray="2 9"/><rect x="96" y="2.700" width="48" height="13.900" fill="#000"/><rect x="94" y="4.700" width="40" height="9.300" fill="#fff"/><rect x="128" y="2.700" width="17" height="13.900" fill="url(#gb2)"/><g font-family="DejaVu Sans, Liberation Sans, sans-serif" font-weight="200" font-size="40" fill="#000" stroke="#000" stroke-width="1.700"><text transform="translate(17.32,128.850) scale(0.947,4.205)">A</text><text transform="translate(18.42,128.850) scale(0.947,4.205)">A</text><text transform="translate(43.58,128.850) scale(1.103,4.205)">F</text><text transform="translate(44.68,128.850) scale(1.103,4.205)">F</text><text transform="translate(70.08,128.850) scale(1.108,4.205)">T</text><text transform="translate(71.18,128.850) scale(1.108,4.205)">T</text></g><rect x="80.500" y="14" width="7.300" height="118.400" fill="#000"/><g font-family="DejaVu Sans, Liberation Sans, sans-serif" font-weight="200" font-size="40" fill="#fff" stroke="#fff" stroke-width="0.620"><text transform="translate(17.87,128.600) scale(0.947,4.205)">A</text><text transform="translate(44.13,128.600) scale(1.103,4.205)">F</text><text transform="translate(70.63,128.600) scale(1.108,4.205)">T</text></g><rect x="81.500" y="10" width="5.300" height="119.900" fill="#fff"/><rect x="95" y="4.700" width="6" height="9.300" fill="#fff"/></svg>
<div style="left:666px;top:230px;width:8px;height:8px;background:#57503f;"></div>
<div style="left:666px;top:230px;width:7px;height:7px;background:#b09d7a;"></div>
<div style="left:666px;top:390px;width:8px;height:8px;background:#57503f;"></div>
<div style="left:666px;top:390px;width:7px;height:7px;background:#b09d7a;"></div>
<div style="left:666px;top:549px;width:8px;height:8px;background:#57503f;"></div>
<div style="left:666px;top:549px;width:7px;height:7px;background:#b09d7a;"></div>
<div style="left:825px;top:230px;width:8px;height:8px;background:#57503f;"></div>
<div style="left:825px;top:230px;width:7px;height:7px;background:#b09d7a;"></div>
<div style="left:825px;top:549px;width:8px;height:8px;background:#57503f;"></div>
<div style="left:825px;top:549px;width:7px;height:7px;background:#b09d7a;"></div>
<div style="left:986px;top:230px;width:8px;height:8px;background:#57503f;"></div>
<div style="left:986px;top:230px;width:7px;height:7px;background:#b09d7a;"></div>
<div style="left:986px;top:390px;width:8px;height:8px;background:#57503f;"></div>
<div style="left:986px;top:390px;width:7px;height:7px;background:#b09d7a;"></div>
<div style="left:986px;top:549px;width:8px;height:8px;background:#57503f;"></div>
<div style="left:986px;top:549px;width:7px;height:7px;background:#b09d7a;"></div>
<svg style="left:659px;top:473px;" width="20" height="20" viewBox="0 0 20 20"><circle cx="10" cy="10" r="4" fill="#3a3a5a" stroke="#b09d7a" stroke-width="1.300"/><path d="M10 1l1.500 4h-3zM10 19l1.500-4h-3zM1 10l4-1.500v3zM19 10l-4-1.500v3z" fill="#c8b896"/><path d="M8.500 8.500a2.500 2.500 0 0 0 0 3z" fill="#e8e8e8"/></svg>
<div style="left:297px;top:603px;width:1049px;height:1px;background:#161616;"></div>
<div style="left:297px;top:604px;width:1049px;height:23px;background:#232323;"></div>
<svg style="left:302px;top:608px;" width="16" height="14" viewBox="0 0 16 14"><rect x="1" y="1.500" width="9" height="7" fill="#bdbdbd"/><path d="M4 3.500v3l3-1.500z" fill="#232323"/><path d="M3.500 10.500h9v-6M6 12.500h9v-6" fill="none" stroke="#bdbdbd" stroke-width="1"/></svg>
<svg style="left:324px;top:608px;" width="15" height="14" viewBox="0 0 15 14"><rect x="1" y="1.500" width="12" height="8" fill="none" stroke="#bdbdbd" stroke-width="1.300"/><path d="M4 12.500h6M6 10v2M8 10v2" stroke="#bdbdbd" stroke-width="1.300"/></svg>
<div style="left:342px;top:606px;width:69px;height:19px;background:#1f1f1f;border:1px solid #303030;border-radius:3px;"></div>
<div class="t" style="left:349px;top:609.5px;font-size:11.5px;color:#c4c4c4;letter-spacing:0.500px;">25%</div>
<svg style="left:397px;top:611px;" width="10" height="8" viewBox="0 0 10 8"><path d="M1 2l4 4 4-4" fill="none" stroke="#b0b0b0" stroke-width="1.300"/></svg>
<svg style="left:415px;top:607px;" width="17" height="17" viewBox="0 0 17 17"><rect x="2" y="2.500" width="12" height="9" fill="none" stroke="#bdbdbd" stroke-width="1.300"/><path d="M8 0.500v4M8 9.500v4M0 7h4M12 7h4M6.500 7h3M8 5.500v3" stroke="#bdbdbd" stroke-width="1.100"/><path d="M10.500 14h5l-2.500 3z" fill="#bdbdbd"/></svg>
<div style="left:434px;top:606px;width:22px;height:19px;background:#161616;border-radius:2px;"></div>
<svg style="left:436px;top:607px;" width="18" height="17" viewBox="0 0 18 17"><path d="M3 12.500L4.500 4.500L14.500 2.500V12.500Z" fill="none" stroke="#2d8ceb" stroke-width="1.500"/><rect x="1.500" y="11" width="3" height="3" fill="#2d8ceb"/><rect x="13" y="11" width="3" height="3" fill="#2d8ceb"/><rect x="3" y="3" width="2.500" height="2.500" fill="#2d8ceb"/><rect x="13" y="1.200" width="2.500" height="2.500" fill="#2d8ceb"/></svg>
<div style="left:457px;top:606px;width:69px;height:19px;background:#1c1c1c;"></div>
<div class="t" style="left:478px;top:610.5px;font-size:10.5px;color:#9a9a9a;letter-spacing:-0.300px;">00110</div>
<svg style="left:529px;top:608px;" width="16" height="13" viewBox="0 0 16 13"><path d="M1 3.500h3l1-1.500h5l1 1.500h3.500v8.500H1z" fill="#bdbdbd"/><circle cx="7.700" cy="7.500" r="2.600" fill="#232323"/><circle cx="7.700" cy="7.500" r="1.400" fill="#bdbdbd"/></svg>
<svg style="left:550px;top:606px;" width="18" height="16" viewBox="0 0 18 16"><path d="M1 10c3-4.500 9-4.500 12 0c-3 4.500-9 4.500-12 0z" fill="#4a4a4a"/><circle cx="7" cy="10" r="2" fill="#232323"/><path d="M10 2.500h1.500l.5-1h3l.5 1H17v4.500h-7z" fill="#4a4a4a"/><circle cx="13.500" cy="4.800" r="1.200" fill="#232323"/></svg>
<svg style="left:573px;top:606px;" width="16" height="18" viewBox="0 0 16 18"><circle cx="8" cy="5" r="3.300" fill="#e82020"/><circle cx="5.300" cy="9.500" r="3.300" fill="#28b828"/><circle cx="10.700" cy="9.500" r="3.300" fill="#3c6cf0"/><path d="M9.500 14h5l-2.500 3z" fill="#bdbdbd"/></svg>
<div style="left:592px;top:606px;width:87px;height:19px;background:#1f1f1f;border:1px solid #303030;border-radius:3px;"></div>
<div class="t" style="left:600px;top:609.5px;font-size:13px;color:#c4c4c4;letter-spacing:0.500px;">完整</div>
<svg style="left:665px;top:611px;" width="10" height="8" viewBox="0 0 10 8"><path d="M1 2l4 4 4-4" fill="none" stroke="#b0b0b0" stroke-width="1.300"/></svg>
<svg style="left:682px;top:608px;" width="16" height="14" viewBox="0 0 16 14"><rect x="1" y="1" width="13" height="11" fill="none" stroke="#bdbdbd" stroke-width="1.200"/><rect x="4" y="3.500" width="7" height="6" fill="#bdbdbd"/></svg>
<div style="left:701px;top:606px;width:22px;height:19px;background:#161616;border-radius:2px;"></div>
<svg style="left:704px;top:608px;" width="16" height="14" viewBox="0 0 16 14"><rect x="1" y="1" width="13.500" height="11.500" fill="#1a3c66" stroke="#2d8ceb" stroke-width="1.300"/><path d="M2 2h3v3H2zM8 2h3v3H8zM5 5h3v3H5zM11 5h3v3h-3zM2 8h3v3H2zM8 8h3v3H8z" fill="#2d8ceb"/></svg>
<div style="left:724px;top:606px;width:104px;height:19px;background:#1f1f1f;border:1px solid #303030;border-radius:3px;"></div>
<div class="t" style="left:732px;top:609.5px;font-size:13px;color:#c4c4c4;letter-spacing:0.500px;">活动摄像机</div>
<svg style="left:814px;top:611px;" width="10" height="8" viewBox="0 0 10 8"><path d="M1 2l4 4 4-4" fill="none" stroke="#b0b0b0" stroke-width="1.300"/></svg>
<div style="left:832px;top:606px;width:68px;height:19px;background:#1f1f1f;border:1px solid #303030;border-radius:3px;"></div>
<div class="t" style="left:838px;top:609.5px;font-size:12.5px;color:#c4c4c4;letter-spacing:0.500px;">1 个...</div>
<svg style="left:886px;top:611px;" width="10" height="8" viewBox="0 0 10 8"><path d="M1 2l4 4 4-4" fill="none" stroke="#b0b0b0" stroke-width="1.300"/></svg>
<svg style="left:904px;top:608px;" width="17" height="14" viewBox="0 0 17 14"><rect x="4" y="6.500" width="8" height="6" fill="none" stroke="#bdbdbd" stroke-width="1.300"/><path d="M1.500 3.500h13M1.500 1v5M14.500 1v5" stroke="#bdbdbd" stroke-width="1.200" fill="none"/></svg>
<div style="left:924px;top:606px;width:21px;height:19px;background:#1c1c1c;border-radius:2px;"></div>
<svg style="left:926px;top:608px;" width="17" height="14" viewBox="0 0 17 14"><rect x="1" y="1" width="12" height="10" fill="none" stroke="#bdbdbd" stroke-width="1.300"/><path d="M8 2.500L5 6.500h2.500L6 10l4-4.500H7.500z" fill="#bdbdbd"/><path d="M11 12h4.500l-2.200 2.500z" fill="#bdbdbd"/></svg>
<svg style="left:948px;top:608px;" width="17" height="14" viewBox="0 0 17 14"><path d="M1.500 3v8.500h13V3" fill="none" stroke="#bdbdbd" stroke-width="1.300"/><rect x="4" y="5" width="2" height="6" fill="#bdbdbd"/><rect x="7" y="2" width="2" height="9" fill="#bdbdbd"/><rect x="10" y="6" width="2" height="5" fill="#bdbdbd"/></svg>
<svg style="left:970px;top:608px;" width="16" height="14" viewBox="0 0 16 14"><rect x="5.500" y="0.500" width="5" height="4" fill="#bdbdbd"/><rect x="0.500" y="9" width="5" height="4" fill="#bdbdbd"/><rect x="10" y="9" width="5" height="4" fill="#bdbdbd"/><path d="M8 4.500V7M3 9V7H12.500V9" fill="none" stroke="#bdbdbd" stroke-width="1.300"/></svg>
<div style="left:990px;top:607px;width:1px;height:17px;background:#3a3a3a;"></div>
<svg style="left:994px;top:607px;" width="16" height="16" viewBox="0 0 16 16"><circle cx="8" cy="8" r="5.200" fill="none" stroke="#bdbdbd" stroke-width="2.800" stroke-dasharray="4.200 1.300"/></svg>
<div class="t" style="left:1015px;top:610px;font-size:11.5px;color:#2d8ceb;">+0.0</div>
<div style="left:1350px;top:67px;width:319px;height:560px;background:#232323;"></div>
<div class="t" style="left:1362px;top:74.5px;font-size:12.5px;color:#b2b2b2;letter-spacing:0.550px;font-weight:300;">AE脚本管理器</div>
<div class="t" style="left:1485px;top:74.5px;font-size:12.2px;color:#dcdcdc;letter-spacing:-0.350px;">Motion 2</div>
<svg style="left:1538px;top:75px;" width="12" height="12" viewBox="0 0 12 12"><path d="M1 2.500h9M1 6h9M1 9.500h9" stroke="#d0d0d0" stroke-width="1.300"/></svg>
<div style="left:1483px;top:90px;width:65px;height:2px;background:#cfcfcf;"></div>
<div class="t" style="left:1571px;top:74.5px;font-size:11.8px;color:#8a8a8a;letter-spacing:-0.250px;">Duik Bassel</div>
<div style="left:1629px;top:70px;width:1px;height:21px;background:#333;"></div>
<svg style="left:1653px;top:73px;" width="16" height="14" viewBox="0 0 16 14"><path d="M2.500 3l4 4-4 4M8.500 3l4 4-4 4" fill="none" stroke="#c8c8c8" stroke-width="1.900"/></svg>
<div style="left:1351.5px;top:95px;width:316.5px;height:531px;border:1px solid #2e2e2e;border-radius:3px;"></div>
<div style="left:1353px;top:98px;width:134px;height:23px;background:#1e1e1e;border:1px solid #303030;border-radius:3px;"></div>
<div class="t" style="left:1361px;top:103px;font-size:12px;color:#c8c8c8;letter-spacing:-0.300px;">Motion v2</div>
<svg style="left:1472px;top:105px;" width="12" height="8" viewBox="0 0 12 8"><path d="M1.500 1.500l4 4 4-4" fill="none" stroke="#b0b0b0" stroke-width="1.300"/></svg>
<svg style="left:1509px;top:103px;" width="40" height="14" viewBox="0 0 40 14"><path d="M1 13.500L11 2.500l6 6 1.500-1.500L24 13.500z" fill="#8a8a8a"/><path d="M15 13.500l9.500-9.500 5 5 1.500-1 5.500 5.500z" fill="#d0d0d0"/></svg>
<svg style="left:1360px;top:141px;" width="11" height="10" viewBox="0 0 11 10"><path d="M5.500 1.500L2 5l3.500 3.500" fill="none" stroke="#d0d0d0" stroke-width="2"/></svg>
<div style="left:1394px;top:145px;width:89px;height:2px;background:#484848;"></div>
<svg style="left:1379px;top:138px;" width="16" height="16" viewBox="0 0 16 16"><circle cx="8" cy="8" r="5.900" fill="#232323" stroke="#8e8e8e" stroke-width="2"/></svg>
<div style="left:1496px;top:137px;width:32px;height:18px;background:#161616;border:1px solid #303030;border-radius:3px;"></div>
<div class="t" style="left:1502px;top:140.5px;font-size:11.5px;color:#d0d0d0;">0</div>
<svg style="left:1360px;top:167px;" width="11" height="10" viewBox="0 0 11 10"><path d="M1 1.500l3 3.500-3 3.500M9.500 1.500L6.500 5l3 3.500" fill="none" stroke="#d0d0d0" stroke-width="2"/></svg>
<div style="left:1394px;top:171px;width:89px;height:2px;background:#484848;"></div>
<svg style="left:1379px;top:164px;" width="16" height="16" viewBox="0 0 16 16"><circle cx="8" cy="8" r="5.900" fill="#232323" stroke="#8e8e8e" stroke-width="2"/></svg>
<div style="left:1496px;top:163px;width:32px;height:18px;background:#161616;border:1px solid #303030;border-radius:3px;"></div>
<div class="t" style="left:1502px;top:166.5px;font-size:11.5px;color:#d0d0d0;">0</div>
<svg style="left:1360px;top:193px;" width="11" height="10" viewBox="0 0 11 10"><path d="M2 1.500L5.500 5 2 8.500" fill="none" stroke="#d0d0d0" stroke-width="2"/></svg>
<div style="left:1394px;top:197px;width:89px;height:2px;background:#484848;"></div>
<svg style="left:1379px;top:190px;" width="16" height="16" viewBox="0 0 16 16"><circle cx="8" cy="8" r="5.900" fill="#232323" stroke="#8e8e8e" stroke-width="2"/></svg>
<div style="left:1496px;top:189px;width:32px;height:18px;background:#161616;border:1px solid #303030;border-radius:3px;"></div>
<div class="t" style="left:1502px;top:192.5px;font-size:11.5px;color:#d0d0d0;">0</div>
<svg style="left:1538px;top:143px;" width="16" height="19" viewBox="0 0 16 19"><path d="M8 1c2 2 3 5 3 9v4H5v-4c0-4 1-7 3-9z" fill="#d8d8d8"/><path d="M5 11l-3 4v2h3zM11 11l3 4v2h-3z" fill="#d8d8d8"/><rect x="4" y="15" width="8" height="2.500" fill="#d8d8d8"/></svg>
<svg style="left:1541px;top:164px;" width="10" height="16" viewBox="0 0 10 16"><path d="M3 14V3M1 5l2-3 2 3M7 2v11M5 11l2 3 2-3" fill="none" stroke="#30b0f0" stroke-width="1.400"/></svg>
<svg style="left:1538px;top:181px;" width="16" height="18" viewBox="0 0 16 18"><circle cx="8" cy="3" r="1.800" fill="none" stroke="#6a6a6a" stroke-width="1.200"/><path d="M8 5v11M4.500 7.500h7M2 10.500c0 3 3 5.500 6 5.500s6-2.500 6-5.500M1 12l1-2.500 1.800 1.500M15 12l-1-2.500-1.800 1.500" fill="none" stroke="#6a6a6a" stroke-width="1.300"/></svg>
<svg style="left:1360px;top:223px;" width="16" height="15" viewBox="0 0 16 15"><path d="M7 1v12M1 7h12" stroke="#dcdcdc" stroke-width="1.800"/></svg>
<div class="t" style="left:1378.5px;top:225.8px;font-size:8.8px;color:#e2e2e2;letter-spacing:0.200px;-webkit-text-stroke:0.250px #e2e2e2;">EXCITE</div>
<svg style="left:1432px;top:223px;" width="16" height="15" viewBox="0 0 16 15"><path d="M7 0.500v6M4.500 4.500L7 7l2.500-2.500M2 6.500c1 2 3 3 5 3s4-1 5-3M0.500 9c1.500 2.200 4 3.300 6.500 3.300s5-1.100 6.500-3.300M0.500 13.500h13" fill="none" stroke="#dcdcdc" stroke-width="1.200"/></svg>
<div class="t" style="left:1451px;top:225.8px;font-size:8.8px;color:#e2e2e2;letter-spacing:0.200px;-webkit-text-stroke:0.250px #e2e2e2;">BLEND</div>
<svg style="left:1501px;top:223px;" width="16" height="15" viewBox="0 0 16 15"><path d="M7 0.500v4M7 9.500v4M0.500 7h4M9.500 7h4M2.300 2.300l2.800 2.800M9 9l2.800 2.800M11.700 2.300L9 5.100M5 9l-2.800 2.800" stroke="#dcdcdc" stroke-width="1.500"/></svg>
<div class="t" style="left:1521.5px;top:225.8px;font-size:8.8px;color:#e2e2e2;letter-spacing:0.200px;-webkit-text-stroke:0.250px #e2e2e2;">BURST</div>
<svg style="left:1360px;top:249px;" width="16" height="15" viewBox="0 0 16 15"><circle cx="4" cy="4" r="2.300" fill="#dcdcdc"/><path d="M0.500 14V9c0-3 7-3 7 0v5z" fill="#dcdcdc"/><circle cx="9.800" cy="3.300" r="2.200" fill="#dcdcdc"/><path d="M8.500 7c2.500-1.500 5 0 5 2v5H9z" fill="#dcdcdc"/></svg>
<div class="t" style="left:1378.5px;top:251.8px;font-size:8.8px;color:#e2e2e2;letter-spacing:0.200px;-webkit-text-stroke:0.250px #e2e2e2;">CLONE</div>
<svg style="left:1432px;top:249px;" width="16" height="15" viewBox="0 0 16 15"><path d="M0.500 13h14M1 3l4.500 5.500 4-3.500" fill="none" stroke="#dcdcdc" stroke-width="1.300"/><path d="M0.500 10.500h14" stroke="#dcdcdc" stroke-width="1.300"/><rect x="10" y="2.500" width="3" height="3" fill="#dcdcdc"/></svg>
<div class="t" style="left:1451px;top:251.8px;font-size:8.8px;color:#e2e2e2;letter-spacing:0.200px;-webkit-text-stroke:0.250px #e2e2e2;">JUMP</div>
<svg style="left:1501px;top:249px;" width="16" height="15" viewBox="0 0 16 15"><path d="M1 13l1-4L10.500 0.800l3 3L5 12.500zM9 2.500l3 3" fill="none" stroke="#dcdcdc" stroke-width="1.400"/></svg>
<div class="t" style="left:1521.5px;top:251.8px;font-size:8.8px;color:#e2e2e2;letter-spacing:0.200px;-webkit-text-stroke:0.250px #e2e2e2;">NAME</div>
<svg style="left:1360px;top:275px;" width="16" height="15" viewBox="0 0 16 15"><path d="M1 4V1h3M10 1h3v3M13 10v3h-3M4 13H1v-3" fill="none" stroke="#dcdcdc" stroke-width="1.400"/><rect x="5.800" y="5.800" width="2.400" height="2.400" fill="#dcdcdc"/></svg>
<div class="t" style="left:1378.5px;top:277.8px;font-size:8.8px;color:#e2e2e2;letter-spacing:0.200px;-webkit-text-stroke:0.250px #e2e2e2;">NULL</div>
<svg style="left:1432px;top:275px;" width="16" height="15" viewBox="0 0 16 15"><circle cx="7" cy="7" r="5.800" fill="none" stroke="#dcdcdc" stroke-width="1.300"/><circle cx="7" cy="7" r="2" fill="#dcdcdc"/><path d="M7 0v3M7 11v3" stroke="#dcdcdc" stroke-width="1.300"/></svg>
<div class="t" style="left:1451px;top:277.8px;font-size:8.8px;color:#e2e2e2;letter-spacing:0.200px;-webkit-text-stroke:0.250px #e2e2e2;">ORBIT</div>
<svg style="left:1501px;top:275px;" width="16" height="15" viewBox="0 0 16 15"><path d="M3 11L11 3" stroke="#dcdcdc" stroke-width="1.300"/><rect x="0.700" y="9.800" width="3.500" height="3.500" fill="none" stroke="#dcdcdc" stroke-width="1.200"/><rect x="9.800" y="0.700" width="3.500" height="3.500" fill="none" stroke="#dcdcdc" stroke-width="1.200"/></svg>
<div class="t" style="left:1521.5px;top:277.8px;font-size:8.8px;color:#e2e2e2;letter-spacing:0.200px;-webkit-text-stroke:0.250px #e2e2e2;">ROPE</div>
<svg style="left:1360px;top:301px;" width="16" height="15" viewBox="0 0 16 15"><rect x="6" y="0.500" width="8" height="6" fill="#dcdcdc"/><path d="M4 3.500v6h7" fill="none" stroke="#dcdcdc" stroke-width="1.300"/><path d="M1.500 6.500v6h7" fill="none" stroke="#dcdcdc" stroke-width="1.300"/><rect x="0" y="12" width="2.500" height="2.500" fill="#dcdcdc"/></svg>
<div class="t" style="left:1378.5px;top:303.8px;font-size:8.8px;color:#e2e2e2;letter-spacing:0.200px;-webkit-text-stroke:0.250px #e2e2e2;">WARP</div>
<svg style="left:1432px;top:301px;" width="16" height="15" viewBox="0 0 16 15"><path d="M9.500 3.200A5.500 5.500 0 1 0 12.500 8" fill="none" stroke="#dcdcdc" stroke-width="1.400"/><path d="M7.500 0.500l3 2.800-3 2.500" fill="none" stroke="#dcdcdc" stroke-width="1.400"/></svg>
<div class="t" style="left:1451px;top:303.8px;font-size:8.8px;color:#e2e2e2;letter-spacing:0.200px;-webkit-text-stroke:0.250px #e2e2e2;">SPIN</div>
<svg style="left:1501px;top:301px;" width="16" height="15" viewBox="0 0 16 15"><path d="M0.500 7c3.500-5.500 10.500-5.500 14 0c-3.500 5.500-10.500 5.500-14 0z" fill="none" stroke="#dcdcdc" stroke-width="1.300"/><circle cx="7.500" cy="7" r="2.300" fill="none" stroke="#dcdcdc" stroke-width="1.300"/></svg>
<div class="t" style="left:1521.5px;top:303.8px;font-size:8.8px;color:#e2e2e2;letter-spacing:0.200px;-webkit-text-stroke:0.250px #e2e2e2;">STARE</div>
<div style="left:1350px;top:240px;width:76px;height:35px;border:2px solid #e3242b;"></div>
<div style="left:1353px;top:330px;width:136px;height:23px;background:#1e1e1e;border:1px solid #303030;border-radius:3px;"></div>
<div class="t" style="left:1361px;top:335.5px;font-size:11.5px;color:#c8c8c8;letter-spacing:-0.250px;">Task Launch</div>
<svg style="left:1474px;top:338px;" width="12" height="8" viewBox="0 0 12 8"><path d="M1.500 1.500l4 4 4-4" fill="none" stroke="#b0b0b0" stroke-width="1.300"/></svg>
<div style="left:1497px;top:330px;width:60px;height:24px;background:#1a1a1a;border:1px solid #0c0c0c;outline:1px solid #5a5a5a;outline-offset:-2px;"></div>
<svg style="left:1520px;top:335px;" width="14" height="14" viewBox="0 0 14 14"><path d="M3 4h8l-.7 9H3.700z" fill="none" stroke="#c8c8c8" stroke-width="1.200"/><path d="M1.500 3.500h11M5 3V1.500h4V3M5.500 6v5M7 6v5M8.500 6v5" stroke="#c8c8c8" stroke-width="1" fill="none"/></svg>
<div style="left:1673px;top:67px;width:219px;height:560px;background:#232323;"></div>
<div class="t" style="left:1686.5px;top:74.5px;font-size:12.8px;color:#b2b2b2;letter-spacing:0.400px;font-weight:300;">信息</div>
<div class="t" style="left:1686.5px;top:104.5px;font-size:12.8px;color:#b2b2b2;letter-spacing:0.400px;font-weight:300;">音频</div>
<div class="t" style="left:1686.5px;top:134.6px;font-size:12.8px;color:#b2b2b2;letter-spacing:0.400px;font-weight:300;">效果和预设</div>
<div class="t" style="left:1686.5px;top:164.7px;font-size:12.8px;color:#b2b2b2;letter-spacing:0.400px;font-weight:300;">库</div>
<div class="t" style="left:1686.5px;top:194.79999999999998px;font-size:12.8px;color:#b2b2b2;letter-spacing:0.400px;font-weight:300;">对齐</div>
<div class="t" style="left:1686.5px;top:224.89999999999998px;font-size:12.8px;color:#bcbcbc;letter-spacing:0.400px;font-weight:300;">字符</div>
<div class="t" style="left:1686.5px;top:477.0px;font-size:12.8px;color:#b2b2b2;letter-spacing:0.400px;font-weight:300;">段落</div>
<div class="t" style="left:1686.5px;top:506.99999999999994px;font-size:12.8px;color:#b2b2b2;letter-spacing:0.400px;font-weight:300;">跟踪器</div>
<div class="t" style="left:1686.5px;top:537.0px;font-size:12.8px;color:#b2b2b2;letter-spacing:0.400px;font-weight:300;">绘画</div>
<div class="t" style="left:1686.5px;top:567.1px;font-size:12.8px;color:#b2b2b2;letter-spacing:0.400px;font-weight:300;">画笔</div>
<div class="t" style="left:1686.5px;top:597.4000000000001px;font-size:12.8px;color:#b2b2b2;letter-spacing:0.400px;font-weight:300;">动态草图</div>
<div style="left:1674px;top:93.25px;width:204px;height:2.5px;background:#161616;"></div>
<div style="left:1674px;top:123.35px;width:204px;height:2.5px;background:#161616;"></div>
<div style="left:1674px;top:153.55px;width:204px;height:2.5px;background:#161616;"></div>
<div style="left:1674px;top:183.75px;width:204px;height:2.5px;background:#161616;"></div>
<div style="left:1674px;top:213.75px;width:204px;height:2.5px;background:#161616;"></div>
<div style="left:1674px;top:466.75px;width:204px;height:2.5px;background:#161616;"></div>
<div style="left:1674px;top:496.75px;width:204px;height:2.5px;background:#161616;"></div>
<div style="left:1674px;top:526.75px;width:204px;height:2.5px;background:#161616;"></div>
<div style="left:1674px;top:556.75px;width:204px;height:2.5px;background:#161616;"></div>
<div style="left:1674px;top:586.75px;width:204px;height:2.5px;background:#161616;"></div>
<div style="left:1674px;top:616.75px;width:204px;height:2.5px;background:#161616;"></div>
<svg style="left:1858.5px;top:225.5px;" width="12" height="12" viewBox="0 0 12 12"><path d="M1 2.500h8.500M1 6h8.500M1 9.500h8.500" stroke="#d0d0d0" stroke-width="1.100"/></svg>
<div style="left:1880.5px;top:68px;width:9.5px;height:485px;background:#303030;border-radius:4.700px;"></div>
<div style="left:1678.5px;top:253px;width:122px;height:18.5px;background:#1b1b1b;border:1px solid #323232;border-radius:3px;"></div>
<div style="left:1782px;top:254px;width:1px;height:16.5px;background:#323232;"></div>
<div class="t" style="left:1686px;top:256.5px;font-size:11.6px;color:#c8c8c8;letter-spacing:-0.400px;">Noto Sans S Chin...</div>
<svg style="left:1786px;top:258px;" width="12" height="8" viewBox="0 0 12 8"><path d="M1.500 1.500l4 4 4-4" fill="none" stroke="#b0b0b0" stroke-width="1.300"/></svg>
<div style="left:1678.5px;top:277px;width:122px;height:18.5px;background:#1b1b1b;border:1px solid #323232;border-radius:3px;"></div>
<div style="left:1782px;top:278px;width:1px;height:16.5px;background:#323232;"></div>
<div class="t" style="left:1686px;top:280.5px;font-size:11.6px;color:#c8c8c8;letter-spacing:-0.400px;">DemiLight</div>
<svg style="left:1786px;top:282px;" width="12" height="8" viewBox="0 0 12 8"><path d="M1.500 1.500l4 4 4-4" fill="none" stroke="#b0b0b0" stroke-width="1.300"/></svg>
<svg style="left:1806px;top:255px;" width="18" height="18" viewBox="0 0 18 18"><path d="M2 16l1-3.500L10.500 5l2.500 2.500L5.500 15z" fill="none" stroke="#9a9a9a" stroke-width="1.200"/><path d="M10 3.500l4.500 4.500M11.500 5.500l2.500-3c1-1 3 .8 2 2l-3 2.500z" fill="#8a8a8a" stroke="#8a8a8a" stroke-width="1.200"/></svg>
<div style="left:1843px;top:267px;width:30px;height:29px;background:#000;"></div>
<div style="left:1853px;top:277px;width:10px;height:9px;background:#232323;"></div>
<div style="left:1830px;top:253px;width:30px;height:30px;background:#fff;border:1px solid #000;"></div>
<svg style="left:1831px;top:254px;" width="28" height="28" viewBox="0 0 28 28"><path d="M0 28L28 0" stroke="#d81818" stroke-width="1.800"/></svg>
<svg style="left:1862px;top:254px;" width="12" height="13" viewBox="0 0 12 13"><path d="M2 3c4-1.500 7 1 7 5" fill="none" stroke="#c8c8c8" stroke-width="1.600"/><path d="M0.500 5.500L2.500 0.800 5.500 4.500zM6.500 7.500h5l-2.500 4z" fill="#c8c8c8"/></svg>
<div style="left:1805px;top:278px;width:20px;height:17px;background:#fff;border:1px solid #d0d0d0;"></div>
<div style="left:1806px;top:279px;width:18px;height:7px;background:#000;"></div>
<div style="left:1831.5px;top:284px;width:10.5px;height:10px;background:#fff;"></div>
<svg style="left:1831.5px;top:284px;" width="11" height="10" viewBox="0 0 11 10"><path d="M0 10L11 0" stroke="#d81818" stroke-width="1"/></svg>
<div style="left:1678px;top:302px;width:195px;height:1.5px;background:#323232;"></div>
<div style="left:1678px;top:351.5px;width:195px;height:1.5px;background:#323232;"></div>
<div style="left:1678px;top:383px;width:195px;height:1.5px;background:#323232;"></div>
<div style="left:1678px;top:435px;width:195px;height:1.5px;background:#323232;"></div>
<svg style="left:1677px;top:306px;" width="20" height="16" viewBox="0 0 20 16"><text x="0" y="14.500" font-family="Liberation Serif, serif" font-weight="bold" font-size="11" fill="#bdbdbd">T</text><text x="6.500" y="14.500" font-family="Liberation Serif, serif" font-weight="bold" font-size="17" fill="#bdbdbd">T</text></svg>
<div class="t" style="left:1702.5px;top:308.8px;font-size:12px;color:#2d8ceb;letter-spacing:-0.400px;">138</div>
<div class="t" style="left:1724px;top:308.8px;font-size:12.5px;color:#a0a0a0;letter-spacing:1.500px;">像素</div>
<svg style="left:1757px;top:311px;" width="8" height="7" viewBox="0 0 8 7"><path d="M0.500 0.500h6l-3 5.500z" fill="#a8a8a8"/></svg>
<svg style="left:1782px;top:306px;" width="18" height="18" viewBox="0 0 18 18"><text x="7" y="8" font-family="Liberation Sans, sans-serif" font-size="8.500" fill="#bdbdbd">A</text><text x="7" y="16.500" font-family="Liberation Sans, sans-serif" font-size="8.500" fill="#bdbdbd">A</text><path d="M6 9h9M6 17.500h9" stroke="#bdbdbd" stroke-width="0.900"/><path d="M3 6.500v10M1 8.500l2-2.500 2 2.500M1 14.500l2 2.500 2-2.500" fill="none" stroke="#bdbdbd" stroke-width="1"/></svg>
<div class="t" style="left:1807px;top:308.8px;font-size:12px;color:#2d8ceb;letter-spacing:-0.200px;">30</div>
<div class="t" style="left:1824px;top:308.8px;font-size:12.5px;color:#a0a0a0;letter-spacing:1.500px;">像素</div>
<svg style="left:1864px;top:311px;" width="8" height="7" viewBox="0 0 8 7"><path d="M0.500 0.500h6l-3 5.500z" fill="#a8a8a8"/></svg>
<svg style="left:1677px;top:326px;" width="20" height="19" viewBox="0 0 20 19"><text x="0" y="12" font-family="Liberation Sans, sans-serif" font-size="12.500" fill="#bdbdbd" letter-spacing="-1.800">V/A</text><path d="M6 15.500h10M8.500 13l-2.500 2.500 2.500 2.500" fill="none" stroke="#bdbdbd" stroke-width="1.100"/></svg>
<div class="t" style="left:1704.5px;top:328px;font-size:12.5px;color:#555;letter-spacing:1.200px;">度量标准</div>
<svg style="left:1757px;top:332px;" width="8" height="7" viewBox="0 0 8 7"><path d="M0.500 0.500h6l-3 5.500z" fill="#a8a8a8"/></svg>
<svg style="left:1784px;top:328px;" width="20" height="18" viewBox="0 0 20 18"><rect x="0.500" y="0.500" width="18.500" height="11" fill="#bdbdbd"/><text x="1.500" y="10" font-family="Liberation Sans, sans-serif" font-weight="bold" font-size="11" fill="#232323" letter-spacing="-1.200">VA</text><path d="M1 15h17.500M3.500 12.800L1 15l2.500 2.200M16 12.800l2.500 2.200-2.500 2.200" fill="none" stroke="#bdbdbd" stroke-width="1.100"/></svg>
<div class="t" style="left:1807px;top:328px;font-size:12px;color:#2d8ceb;">0</div>
<svg style="left:1864px;top:332px;" width="8" height="7" viewBox="0 0 8 7"><path d="M0.500 0.500h6l-3 5.500z" fill="#a8a8a8"/></svg>
<svg style="left:1678px;top:358px;" width="17" height="15" viewBox="0 0 17 15"><path d="M1 2h15M1 7.500h15M1 13h15" stroke="#bdbdbd" stroke-width="2"/></svg>
<div class="t" style="left:1703px;top:359.5px;font-size:12px;color:#2d8ceb;">2</div>
<div class="t" style="left:1714px;top:359.5px;font-size:12.5px;color:#a0a0a0;letter-spacing:1.500px;">像素</div>
<svg style="left:1757px;top:363px;" width="8" height="7" viewBox="0 0 8 7"><path d="M0.500 0.500h6l-3 5.500z" fill="#a8a8a8"/></svg>
<div style="left:1767.5px;top:357.5px;width:106px;height:18.5px;background:#1e1e1e;border:1px solid #323232;border-radius:3px;"></div>
<svg style="left:1859px;top:363px;" width="12" height="8" viewBox="0 0 12 8"><path d="M1.500 1.500l4 4 4-4" fill="none" stroke="#b0b0b0" stroke-width="1.300"/></svg>
<svg style="left:1677px;top:388px;" width="22" height="18" viewBox="0 0 22 18"><text x="6" y="15.500" font-family="Liberation Serif, serif" font-weight="bold" font-size="19" fill="#bdbdbd">T</text><path d="M3 3v12M1 5l2-2.500 2 2.500M1 13l2 2.500 2-2.500" fill="none" stroke="#bdbdbd" stroke-width="1"/></svg>
<div class="t" style="left:1702.5px;top:390px;font-size:12px;color:#2d8ceb;letter-spacing:-0.400px;">100</div>
<div class="t" style="left:1725px;top:390.5px;font-size:11.5px;color:#a0a0a0;">%</div>
<svg style="left:1757px;top:393px;" width="8" height="7" viewBox="0 0 8 7"><path d="M0.500 0.500h6l-3 5.500z" fill="#a8a8a8"/></svg>
<svg style="left:1782px;top:388px;" width="22" height="19" viewBox="0 0 22 19"><text x="3.500" y="13" font-family="Liberation Serif, serif" font-weight="bold" font-size="17" fill="#bdbdbd">T</text><path d="M2 16.500h15M4.500 14.300L2 16.500l2.500 2.200M14.500 14.300l2.500 2.200-2.500 2.200" fill="none" stroke="#bdbdbd" stroke-width="1"/></svg>
<div class="t" style="left:1807px;top:390px;font-size:12px;color:#2d8ceb;letter-spacing:-0.400px;">100</div>
<div class="t" style="left:1829.5px;top:390.5px;font-size:11.5px;color:#a0a0a0;">%</div>
<svg style="left:1864px;top:393px;" width="8" height="7" viewBox="0 0 8 7"><path d="M0.500 0.500h6l-3 5.500z" fill="#a8a8a8"/></svg>
<svg style="left:1677px;top:410px;" width="22" height="18" viewBox="0 0 22 18"><text x="0" y="11.500" font-family="Liberation Sans, sans-serif" font-size="12" fill="#bdbdbd">A</text><text x="8.500" y="8" font-family="Liberation Sans, sans-serif" font-size="8" fill="#bdbdbd">a</text><path d="M0 13.500h13" stroke="#bdbdbd" stroke-width="0.900"/><path d="M11.500 9.500v7.500M9.500 11.500l2-2.500 2 2.500" fill="none" stroke="#bdbdbd" stroke-width="1"/></svg>
<div class="t" style="left:1702.5px;top:412px;font-size:12px;color:#2d8ceb;">0</div>
<div class="t" style="left:1714px;top:412px;font-size:12.5px;color:#a0a0a0;letter-spacing:1.500px;">像素</div>
<svg style="left:1757px;top:415px;" width="8" height="7" viewBox="0 0 8 7"><path d="M0.500 0.500h6l-3 5.500z" fill="#a8a8a8"/></svg>
<svg style="left:1784px;top:409px;" width="20" height="20" viewBox="0 0 20 20"><rect x="3.500" y="2.500" width="11" height="11" fill="none" stroke="#bdbdbd" stroke-width="0.800" stroke-dasharray="1 1"/><text x="4.500" y="12" font-family="Liberation Sans, Noto Sans CJK JP, Noto Sans CJK SC, sans-serif" font-size="9" fill="#bdbdbd">あ</text><path d="M1 17h5M4 15l2 2-2 2M17 17h-5M14 15l-2 2 2 2" fill="none" stroke="#bdbdbd" stroke-width="0.900"/></svg>
<div class="t" style="left:1807px;top:412px;font-size:12px;color:#2d8ceb;">0</div>
<div class="t" style="left:1817px;top:412px;font-size:12px;color:#a0a0a0;">%</div>
<svg style="left:1864px;top:415px;" width="8" height="7" viewBox="0 0 8 7"><path d="M0.500 0.500h6l-3 5.500z" fill="#a8a8a8"/></svg>
<div style="left:1697.5px;top:440px;width:26px;height:21px;background:#161616;border:1px solid #2c2c2c;border-radius:3px;"></div>
<svg style="left:1698px;top:440px;" width="170" height="22" viewBox="0 0 170 22"><text x="7" y="15" font-family="Liberation Serif, serif" font-weight="bold" font-size="15.500" fill="#2d8ceb">T</text><text x="33" y="15" font-family="Liberation Serif, serif" font-style="italic" font-size="15.500" fill="#bdbdbd">T</text><text x="57" y="15" font-family="Liberation Serif, serif" font-size="15.500" fill="#bdbdbd">TT</text><text x="83" y="15" font-family="Liberation Serif, serif" font-size="15.500" fill="#bdbdbd">T</text><text x="92.500" y="15" font-family="Liberation Serif, serif" font-size="11.500" fill="#bdbdbd">T</text><text x="115" y="15" font-family="Liberation Serif, serif" font-size="15.500" fill="#bdbdbd">T</text><text x="124.500" y="8" font-family="Liberation Serif, serif" font-size="7" fill="#bdbdbd">1</text><text x="140" y="15" font-family="Liberation Serif, serif" font-size="15.500" fill="#bdbdbd">T</text><text x="149.500" y="16.500" font-family="Liberation Serif, serif" font-size="7" fill="#bdbdbd">1</text></svg>
<div style="left:0px;top:630.6px;width:1891px;height:1.7px;background:#2d86e0;"></div>
<div style="left:0px;top:632.5px;width:1892px;height:398px;background:#232323;"></div>
<div class="t" style="left:1.5px;top:637.5px;font-size:12.8px;color:#8c8c8c;letter-spacing:0.400px;">渲染队列</div>
<svg style="left:92px;top:642px;" width="8" height="8" viewBox="0 0 8 8"><path d="M1 1l5 5M6 1l-5 5" stroke="#9a9a9a" stroke-width="1.100"/></svg>
<div style="left:108px;top:638.5px;width:10.5px;height:10.5px;background:#b09d7a;"></div>
<div class="t" style="left:131px;top:637.5px;font-size:13px;color:#dcdcdc;letter-spacing:1px;">合成1</div>
<svg style="left:173px;top:639px;" width="12" height="12" viewBox="0 0 12 12"><path d="M1 2.500h9M1 6h9M1 9.500h9" stroke="#c8c8c8" stroke-width="1.300"/></svg>
<div style="left:93px;top:655px;width:89px;height:2px;background:#cfcfcf;"></div>
<div style="left:219px;top:638.5px;width:10.5px;height:10.5px;background:#b09d7a;"></div>
<div class="t" style="left:242px;top:637.5px;font-size:13px;color:#8c8c8c;letter-spacing:1px;">预合成1</div>
<div class="t s" style="left:10px;top:661px;font-size:18px;color:#2d8ceb;font-weight:bold;letter-spacing:1px;">00110</div>
<div class="t" style="left:-2px;top:680.5px;font-size:10.5px;color:#2a72c2;letter-spacing:-0.250px;">0:04:10 (25.00 fps)</div>
<div style="left:95px;top:666px;width:306.5px;height:19px;background:#161616;border:1px solid #2c2c2c;border-radius:3px;"></div>
<svg style="left:100px;top:667.5px;" width="20" height="16" viewBox="0 0 20 16"><circle cx="8.500" cy="6.500" r="3.400" fill="none" stroke="#c0c0c0" stroke-width="1.300"/><path d="M6 9L2 13.500" stroke="#c0c0c0" stroke-width="1.500"/><path d="M12.500 10h4.500l-2.200 2.800z" fill="#c0c0c0"/></svg>
<svg style="left:417px;top:668px;" width="18" height="16" viewBox="0 0 18 16"><path d="M1 5.500h6M7 5.500l4 0M9 5.500v5h4" fill="none" stroke="#bdbdbd" stroke-width="1.300"/><rect x="0.500" y="3.500" width="4" height="4" fill="#bdbdbd"/><rect x="10" y="3.500" width="4.500" height="4" fill="#bdbdbd"/><rect x="12" y="8.500" width="4.500" height="4" fill="#bdbdbd"/><path d="M12.500 14h4l-2 2z" fill="#bdbdbd"/></svg>
<svg style="left:449px;top:667px;" width="20" height="18" viewBox="0 0 20 18"><path d="M6 1v8M2 5h8M3.200 2.200l5.600 5.600M8.800 2.200L3.200 7.800" stroke="#bdbdbd" stroke-width="1.200"/><path d="M8.500 9.500l5-2.500 5 2.500v6l-5 2.500-5-2.500zM8.500 9.500l5 2.500 5-2.500M13.500 12v6" fill="#232323" stroke="#bdbdbd" stroke-width="1.200"/></svg>
<svg style="left:484px;top:669px;" width="18" height="15" viewBox="0 0 18 15"><path d="M2 7.500c0-7 13-7 13 0z" fill="#bdbdbd"/><path d="M8.500 1v13" stroke="#232323" stroke-width="1.200"/><path d="M0.500 13.500h16M0.500 10.500h16" stroke="#bdbdbd" stroke-width="1.500"/><rect x="5" y="9" width="7" height="5" fill="#bdbdbd"/></svg>
<svg style="left:511px;top:669px;" width="16" height="15" viewBox="0 0 16 15"><rect x="3.500" y="0.500" width="11.500" height="10.500" fill="#bdbdbd"/><path d="M5 2v7.500M13.500 2v7.500" stroke="#232323" stroke-dasharray="1.300 1.200"/><path d="M1.800 3v10h10M0.500 5.500v9h9" fill="none" stroke="#bdbdbd" stroke-width="1.200"/></svg>
<svg style="left:537px;top:668px;" width="17" height="17" viewBox="0 0 17 17"><circle cx="9.500" cy="6.500" r="5.500" fill="#bdbdbd"/><path d="M3 8a5.500 5.500 0 0 0 9 4.500M1.800 10.500a5.500 5.500 0 0 0 8.500 4" fill="none" stroke="#bdbdbd" stroke-width="1.200"/></svg>
<svg style="left:570px;top:668px;" width="18" height="17" viewBox="0 0 18 17"><rect x="1.500" y="3.500" width="14.500" height="12" fill="none" stroke="#bdbdbd" stroke-width="1.400"/><path d="M3 5.500c2 0 3 1.500 4.500 4.500s3 4 7 4" fill="none" stroke="#bdbdbd" stroke-width="1.200"/><path d="M4 0.500v3M13 0.500v3" stroke="#bdbdbd" stroke-width="1.300"/></svg>
<div style="left:0px;top:693.5px;width:604px;height:1.5px;background:#161616;"></div>
<div style="left:0px;top:695px;width:604px;height:18px;background:#313131;"></div>
<div style="left:0px;top:713px;width:604px;height:1.3px;background:#141414;"></div>
<svg style="left:0px;top:695px;overflow:visible;" width="604" height="18" viewBox="0 0 604 18"><circle cx="-1" cy="9.500" r="4.500" fill="none" stroke="#bdbdbd" stroke-width="1.300"/><circle cx="-1" cy="9.500" r="1.800" fill="none" stroke="#bdbdbd" stroke-width="1"/><circle cx="14.500" cy="9.500" r="3.200" fill="#bdbdbd"/><rect x="25" y="8.500" width="9" height="6" rx="0.800" fill="#bdbdbd"/><path d="M27 8.500V6.500a2.500 2.500 0 0 1 5 0v2" fill="none" stroke="#bdbdbd" stroke-width="1.400"/><rect x="28.900" y="10" width="1.300" height="2.500" fill="#313131"/><path d="M41.5 4.500V14.500" stroke="#161616" stroke-width="1.500"/><path d="M73.5 4.500V14.500" stroke="#161616" stroke-width="1.500"/><path d="M106.5 4.500V14.500" stroke="#161616" stroke-width="1.500"/><path d="M334 4.500V14.500" stroke="#161616" stroke-width="1.500"/><path d="M470 4.500V14.500" stroke="#161616" stroke-width="1.500"/><path d="M588 4.500V14.500" stroke="#161616" stroke-width="1.500"/><path d="M55.500 3.500h5.500l6.500 6.500-5 5.500-7-7z" fill="#bdbdbd"/><circle cx="58" cy="6.300" r="1.200" fill="#313131"/><path d="M340.200 9.800a3.900 3.900 0 0 1 7.800 0z" fill="none" stroke="#bdbdbd" stroke-width="1.200"/><path d="M344.100 7v6.500M341.800 8.200h4.600M338 12.300h4.200M346 12.300h4.200" fill="none" stroke="#bdbdbd" stroke-width="1.200"/><path d="M359.500 5v9M355 9.500h9M356.300 6.300l6.400 6.400M362.700 6.300l-6.400 6.400" stroke="#bdbdbd" stroke-width="1.100"/><circle cx="359.500" cy="9.500" r="1.800" fill="#313131" stroke="#bdbdbd" stroke-width="0.800"/><path d="M369.500 5.500l9 9" stroke="#bdbdbd" stroke-width="1.400"/><path d="M369 5l2.500 0.500-2 2z" fill="#bdbdbd"/><text x="384" y="14" font-family="Liberation Sans, sans-serif" font-style="italic" font-size="12.500" fill="#bdbdbd" letter-spacing="-0.600">fx</text><rect x="398.500" y="5" width="10.500" height="9.500" fill="#bdbdbd"/><path d="M400.200 6v8M407.300 6v8" stroke="#2b2b2b" stroke-width="1" stroke-dasharray="1.200 1.200"/><rect x="401.800" y="7" width="4" height="5.500" fill="#8a8a8a"/><circle cx="421" cy="8.500" r="4.300" fill="#bdbdbd"/><path d="M416 9a4.300 4.300 0 0 0 7 4M414.800 11a4.300 4.300 0 0 0 6.500 3.500" fill="none" stroke="#bdbdbd" stroke-width="1"/><circle cx="434.500" cy="9.800" r="4.500" fill="#bdbdbd"/><path d="M437.700 6.600a4.500 4.500 0 0 1 -6.400 6.400z" fill="#313131"/><path d="M444.500 7.500l5-2.500 5 2.500v5l-5 2.500-5-2.500zM444.500 7.500l5 2.500 5-2.500M449.500 10v5" fill="none" stroke="#bdbdbd" stroke-width="1.100"/></svg>
<div class="t" style="left:79.5px;top:699px;font-size:11px;color:#9a9a9a;">#</div>
<div class="t" style="left:113px;top:697.5px;font-size:13px;color:#c4c4c4;letter-spacing:0.800px;">源名称</div>
<div class="t" style="left:477.5px;top:697.5px;font-size:13px;color:#c4c4c4;letter-spacing:0.800px;">父级</div>
<div style="left:0px;top:714px;width:604px;height:19px;background:#464646;"></div>
<div style="left:0px;top:733.3px;width:604px;height:0.7px;background:#222;"></div>
<div style="left:8px;top:716.5px;width:13px;height:13.5px;background:#353535;"></div>
<div style="left:23px;top:716.5px;width:13px;height:13.5px;background:#353535;"></div>
<svg style="left:46px;top:719px;" width="10" height="10" viewBox="0 0 10 10"><path d="M1 1h7.500l-3.700 8z" fill="#c4c4c4"/></svg>
<div style="left:59px;top:716px;width:15px;height:15.5px;background:#b09d7a;"></div>
<div class="t s" style="left:80px;top:718px;font-size:12.5px;color:#c4c4c4;font-weight:bold;">1</div>
<svg style="left:108.5px;top:716px;" width="17" height="15" viewBox="0 0 17 15"><rect x="0.700" y="1.200" width="15.500" height="12.500" fill="#3a3a3a" stroke="#c4c4c4" stroke-width="1.200"/><rect x="3.500" y="3" width="10" height="9" fill="#cfcfcf"/><circle cx="6.500" cy="5.800" r="2" fill="#3a7bd8"/><rect x="8.500" y="5" width="4" height="4" fill="#e03030"/><path d="M5 11.500l3-4.500 3 4.500z" fill="#2aa04a"/><path d="M2.300 2.500v10M14.700 2.500v10" stroke="#c4c4c4" stroke-width="1" stroke-dasharray="1.200 1"/></svg>
<div style="left:128px;top:714.3px;width:205px;height:18.5px;background:#3c3c3c;border:2px solid #a2a2a2;"></div>
<div class="t s" style="left:132px;top:719.3px;font-size:12px;color:#c8c8c8;font-weight:bold;letter-spacing:0.800px;">预合成 6</div>
<div style="left:338px;top:716.5px;width:12px;height:13.5px;background:#353535;"></div>
<div style="left:353.5px;top:716.5px;width:12px;height:13.5px;background:#353535;"></div>
<div style="left:368.7px;top:716.5px;width:12px;height:13.5px;background:#353535;"></div>
<div style="left:384px;top:716.5px;width:12px;height:13.5px;background:#353535;"></div>
<svg style="left:338px;top:717px;" width="13" height="13" viewBox="0 0 13 13"><path d="M2.200 6.800a3.900 3.900 0 0 1 7.800 0z" fill="none" stroke="#bdbdbd" stroke-width="1.200"/><path d="M6.100 4v6.500M3.800 5.200h4.600M0 9.300h4.200M8 9.300h4.200" fill="none" stroke="#bdbdbd" stroke-width="1.200"/></svg>
<svg style="left:368px;top:717px;" width="13" height="13" viewBox="0 0 13 13"><path d="M1.500 12L12 1.500" stroke="#bdbdbd" stroke-width="1.300"/></svg>
<svg style="left:383px;top:715px;" width="14" height="16" viewBox="0 0 14 16"><text x="1" y="12.500" font-family="Liberation Sans, sans-serif" font-style="italic" font-size="12.500" fill="#bdbdbd" letter-spacing="-0.600">fx</text></svg>
<div style="left:413.5px;top:716.5px;width:12px;height:13.5px;background:#353535;"></div>
<div style="left:428px;top:716.5px;width:12px;height:13.5px;background:#353535;"></div>
<div style="left:443px;top:716.5px;width:12px;height:13.5px;background:#353535;"></div>
<svg style="left:474.5px;top:717px;" width="14" height="14" viewBox="0 0 14 14"><path d="M8.300 7A1.300 1.300 0 0 0 5.700 7A2.600 2.600 0 0 0 10.900 7A3.900 3.900 0 0 0 3.100 7A5.200 5.200 0 0 0 10.900 11.500" fill="none" stroke="#a4a4a4" stroke-width="1.100"/></svg>
<div style="left:494px;top:714.3px;width:89px;height:19px;background:#1d1d1d;"></div>
<div class="t" style="left:500.5px;top:717px;font-size:13px;color:#d0d0d0;">无</div>
<svg style="left:569px;top:720.5px;" width="11" height="8" viewBox="0 0 11 8"><path d="M1.500 1.500l3.800 3.800 3.800-3.800" fill="none" stroke="#b8b8b8" stroke-width="1.100"/></svg>
<div style="left:0px;top:754px;width:604px;height:19.3px;background:#2e2e2e;"></div>
<div style="left:0px;top:773.3px;width:604px;height:0.7px;background:#222;"></div>
<div style="left:8px;top:756.5px;width:13px;height:13.5px;background:#222222;"></div>
<div style="left:23px;top:756.5px;width:13px;height:13.5px;background:#222222;"></div>
<svg style="left:46px;top:759px;" width="10" height="10" viewBox="0 0 10 10"><path d="M1.500 0.800v8l7.500-4z" fill="#b4b4b4"/></svg>
<div style="left:59px;top:756px;width:15px;height:15.5px;background:#b53838;"></div>
<div class="t s" style="left:80px;top:758px;font-size:12.5px;color:#c4c4c4;font-weight:bold;">2</div>
<div style="left:109px;top:756px;width:17px;height:16px;background:#fff;border:1px solid #111;border-radius:1px;"></div>
<div class="t s" style="left:132px;top:759.3px;font-size:12px;color:#c8c8c8;font-weight:bold;letter-spacing:0.800px;">白色 纯色 9</div>
<div style="left:338px;top:756.5px;width:12px;height:13.5px;background:#222222;"></div>
<div style="left:353.5px;top:756.5px;width:12px;height:13.5px;background:#222222;"></div>
<div style="left:368.7px;top:756.5px;width:12px;height:13.5px;background:#222222;"></div>
<div style="left:384px;top:756.5px;width:12px;height:13.5px;background:#222222;"></div>
<svg style="left:338px;top:757px;" width="13" height="13" viewBox="0 0 13 13"><path d="M2.200 6.800a3.900 3.900 0 0 1 7.800 0z" fill="none" stroke="#bdbdbd" stroke-width="1.200"/><path d="M6.100 4v6.500M3.800 5.200h4.600M0 9.300h4.200M8 9.300h4.200" fill="none" stroke="#bdbdbd" stroke-width="1.200"/></svg>
<svg style="left:368px;top:757px;" width="13" height="13" viewBox="0 0 13 13"><path d="M1.500 12L12 1.500" stroke="#bdbdbd" stroke-width="1.300"/></svg>
<div style="left:413.5px;top:756.5px;width:12px;height:13.5px;background:#222222;"></div>
<div style="left:428px;top:756.5px;width:12px;height:13.5px;background:#222222;"></div>
<div style="left:443px;top:756.5px;width:12px;height:13.5px;background:#222222;"></div>
<svg style="left:474.5px;top:757px;" width="14" height="14" viewBox="0 0 14 14"><path d="M8.300 7A1.300 1.300 0 0 0 5.700 7A2.600 2.600 0 0 0 10.900 7A3.900 3.900 0 0 0 3.100 7A5.200 5.200 0 0 0 10.900 11.500" fill="none" stroke="#a4a4a4" stroke-width="1.100"/></svg>
<div style="left:494px;top:754.3px;width:89px;height:19px;background:#1d1d1d;"></div>
<div class="t" style="left:500.5px;top:757px;font-size:13px;color:#d0d0d0;">无</div>
<svg style="left:569px;top:760.5px;" width="11" height="8" viewBox="0 0 11 8"><path d="M1.500 1.500l3.800 3.800 3.800-3.800" fill="none" stroke="#b8b8b8" stroke-width="1.100"/></svg>
<div style="left:0px;top:774px;width:604px;height:19.3px;background:#2e2e2e;"></div>
<div style="left:0px;top:793.3px;width:604px;height:0.7px;background:#222;"></div>
<div style="left:23px;top:776.5px;width:13px;height:13.5px;background:#222222;"></div>
<svg style="left:46px;top:779px;" width="10" height="10" viewBox="0 0 10 10"><path d="M1.500 0.800v8l7.500-4z" fill="#b4b4b4"/></svg>
<div style="left:59px;top:776px;width:15px;height:15.5px;background:#b53838;"></div>
<div class="t s" style="left:80px;top:778px;font-size:12.5px;color:#c4c4c4;font-weight:bold;">3</div>
<div class="t s" style="left:112px;top:776.5px;font-size:15px;color:#c4c4c4;">T</div>
<div class="t m" style="left:131px;top:780px;font-size:10.5px;color:#c4c4c4;font-weight:bold;letter-spacing:0.650px;">CINEMA4...TRATOR AFTEREFFECTS</div>
<div style="left:338px;top:776.5px;width:12px;height:13.5px;background:#222222;"></div>
<div style="left:353.5px;top:776.5px;width:12px;height:13.5px;background:#222222;"></div>
<div style="left:368.7px;top:776.5px;width:12px;height:13.5px;background:#222222;"></div>
<div style="left:384px;top:776.5px;width:12px;height:13.5px;background:#222222;"></div>
<svg style="left:338px;top:777px;" width="13" height="13" viewBox="0 0 13 13"><path d="M2.200 6.800a3.900 3.900 0 0 1 7.800 0z" fill="none" stroke="#bdbdbd" stroke-width="1.200"/><path d="M6.100 4v6.500M3.800 5.200h4.600M0 9.300h4.200M8 9.300h4.200" fill="none" stroke="#bdbdbd" stroke-width="1.200"/></svg>
<svg style="left:353px;top:777px;" width="13" height="13" viewBox="0 0 13 13"><path d="M6 1v10M1 6h10M2.500 2.500l7 7M9.500 2.500l-7 7" stroke="#6a6a6a" stroke-width="1"/><circle cx="6" cy="6" r="1.800" fill="#222" stroke="#6a6a6a" stroke-width="0.800"/></svg>
<svg style="left:368px;top:777px;" width="13" height="13" viewBox="0 0 13 13"><path d="M1.500 12L12 1.500" stroke="#bdbdbd" stroke-width="1.300"/></svg>
<div style="left:413.5px;top:776.5px;width:12px;height:13.5px;background:#222222;"></div>
<div style="left:428px;top:776.5px;width:12px;height:13.5px;background:#222222;"></div>
<div style="left:443px;top:776.5px;width:12px;height:13.5px;background:#222222;"></div>
<svg style="left:474.5px;top:777px;" width="14" height="14" viewBox="0 0 14 14"><path d="M8.300 7A1.300 1.300 0 0 0 5.700 7A2.600 2.600 0 0 0 10.900 7A3.900 3.900 0 0 0 3.100 7A5.200 5.200 0 0 0 10.900 11.500" fill="none" stroke="#a4a4a4" stroke-width="1.100"/></svg>
<div style="left:494px;top:774.3px;width:89px;height:19px;background:#1d1d1d;"></div>
<div class="t" style="left:500.5px;top:777px;font-size:13px;color:#d0d0d0;">无</div>
<svg style="left:569px;top:780.5px;" width="11" height="8" viewBox="0 0 11 8"><path d="M1.500 1.500l3.800 3.800 3.800-3.800" fill="none" stroke="#b8b8b8" stroke-width="1.100"/></svg>
<div style="left:0px;top:794px;width:604px;height:19.3px;background:#2e2e2e;"></div>
<div style="left:0px;top:813.3px;width:604px;height:0.7px;background:#222;"></div>
<div style="left:23px;top:796.5px;width:13px;height:13.5px;background:#222222;"></div>
<svg style="left:46px;top:799px;" width="10" height="10" viewBox="0 0 10 10"><path d="M1.500 0.800v8l7.500-4z" fill="#b4b4b4"/></svg>
<div style="left:59px;top:796px;width:15px;height:15.5px;background:#b09d7a;"></div>
<div class="t s" style="left:80px;top:798px;font-size:12.5px;color:#c4c4c4;font-weight:bold;">4</div>
<svg style="left:108.5px;top:796px;" width="17" height="15" viewBox="0 0 17 15"><rect x="0.700" y="1.200" width="15.500" height="12.500" fill="#3a3a3a" stroke="#c4c4c4" stroke-width="1.200"/><rect x="3.500" y="3" width="10" height="9" fill="#cfcfcf"/><circle cx="6.500" cy="5.800" r="2" fill="#3a7bd8"/><rect x="8.500" y="5" width="4" height="4" fill="#e03030"/><path d="M5 11.500l3-4.500 3 4.500z" fill="#2aa04a"/><path d="M2.300 2.500v10M14.700 2.500v10" stroke="#c4c4c4" stroke-width="1" stroke-dasharray="1.200 1"/></svg>
<div class="t s" style="left:132px;top:799.3px;font-size:12px;color:#c8c8c8;font-weight:bold;letter-spacing:0.800px;">预合成 1</div>
<div style="left:338px;top:796.5px;width:12px;height:13.5px;background:#222222;"></div>
<div style="left:353.5px;top:796.5px;width:12px;height:13.5px;background:#222222;"></div>
<div style="left:368.7px;top:796.5px;width:12px;height:13.5px;background:#222222;"></div>
<div style="left:384px;top:796.5px;width:12px;height:13.5px;background:#222222;"></div>
<svg style="left:338px;top:797px;" width="13" height="13" viewBox="0 0 13 13"><path d="M2.200 6.800a3.900 3.900 0 0 1 7.800 0z" fill="none" stroke="#bdbdbd" stroke-width="1.200"/><path d="M6.100 4v6.500M3.800 5.200h4.600M0 9.300h4.200M8 9.300h4.200" fill="none" stroke="#bdbdbd" stroke-width="1.200"/></svg>
<svg style="left:368px;top:797px;" width="13" height="13" viewBox="0 0 13 13"><path d="M1.500 12L12 1.500" stroke="#bdbdbd" stroke-width="1.300"/></svg>
<div style="left:413.5px;top:796.5px;width:12px;height:13.5px;background:#222222;"></div>
<div style="left:428px;top:796.5px;width:12px;height:13.5px;background:#222222;"></div>
<div style="left:443px;top:796.5px;width:12px;height:13.5px;background:#222222;"></div>
<svg style="left:474.5px;top:797px;" width="14" height="14" viewBox="0 0 14 14"><path d="M8.300 7A1.300 1.300 0 0 0 5.700 7A2.600 2.600 0 0 0 10.900 7A3.900 3.900 0 0 0 3.100 7A5.200 5.200 0 0 0 10.900 11.500" fill="none" stroke="#a4a4a4" stroke-width="1.100"/></svg>
<div style="left:494px;top:794.3px;width:89px;height:19px;background:#1d1d1d;"></div>
<div class="t" style="left:500.5px;top:797px;font-size:13px;color:#d0d0d0;">无</div>
<svg style="left:569px;top:800.5px;" width="11" height="8" viewBox="0 0 11 8"><path d="M1.500 1.500l3.800 3.800 3.800-3.800" fill="none" stroke="#b8b8b8" stroke-width="1.100"/></svg>
<div style="left:0px;top:814px;width:604px;height:19.3px;background:#2e2e2e;"></div>
<div style="left:0px;top:833.3px;width:604px;height:0.7px;background:#222;"></div>
<div style="left:23px;top:816.5px;width:13px;height:13.5px;background:#222222;"></div>
<svg style="left:46px;top:819px;" width="10" height="10" viewBox="0 0 10 10"><path d="M1.500 0.800v8l7.500-4z" fill="#b4b4b4"/></svg>
<div style="left:59px;top:816px;width:15px;height:15.5px;background:#b09d7a;"></div>
<div class="t s" style="left:80px;top:818px;font-size:12.5px;color:#c4c4c4;font-weight:bold;">5</div>
<svg style="left:108.5px;top:816px;" width="17" height="15" viewBox="0 0 17 15"><rect x="0.700" y="1.200" width="15.500" height="12.500" fill="#3a3a3a" stroke="#c4c4c4" stroke-width="1.200"/><rect x="3.500" y="3" width="10" height="9" fill="#cfcfcf"/><circle cx="6.500" cy="5.800" r="2" fill="#3a7bd8"/><rect x="8.500" y="5" width="4" height="4" fill="#e03030"/><path d="M5 11.500l3-4.500 3 4.500z" fill="#2aa04a"/><path d="M2.300 2.500v10M14.700 2.500v10" stroke="#c4c4c4" stroke-width="1" stroke-dasharray="1.200 1"/></svg>
<div class="t s" style="left:132px;top:819.3px;font-size:12px;color:#c8c8c8;font-weight:bold;letter-spacing:0.800px;">预合成 2</div>
<div style="left:338px;top:816.5px;width:12px;height:13.5px;background:#222222;"></div>
<div style="left:353.5px;top:816.5px;width:12px;height:13.5px;background:#222222;"></div>
<div style="left:368.7px;top:816.5px;width:12px;height:13.5px;background:#222222;"></div>
<div style="left:384px;top:816.5px;width:12px;height:13.5px;background:#222222;"></div>
<svg style="left:338px;top:817px;" width="13" height="13" viewBox="0 0 13 13"><path d="M2.200 6.800a3.900 3.900 0 0 1 7.800 0z" fill="none" stroke="#bdbdbd" stroke-width="1.200"/><path d="M6.100 4v6.500M3.800 5.200h4.600M0 9.300h4.200M8 9.300h4.200" fill="none" stroke="#bdbdbd" stroke-width="1.200"/></svg>
<svg style="left:368px;top:817px;" width="13" height="13" viewBox="0 0 13 13"><path d="M1.500 12L12 1.500" stroke="#bdbdbd" stroke-width="1.300"/></svg>
<div style="left:413.5px;top:816.5px;width:12px;height:13.5px;background:#222222;"></div>
<div style="left:428px;top:816.5px;width:12px;height:13.5px;background:#222222;"></div>
<div style="left:443px;top:816.5px;width:12px;height:13.5px;background:#222222;"></div>
<svg style="left:474.5px;top:817px;" width="14" height="14" viewBox="0 0 14 14"><path d="M8.300 7A1.300 1.300 0 0 0 5.700 7A2.600 2.600 0 0 0 10.900 7A3.900 3.900 0 0 0 3.100 7A5.200 5.200 0 0 0 10.900 11.500" fill="none" stroke="#a4a4a4" stroke-width="1.100"/></svg>
<div style="left:494px;top:814.3px;width:89px;height:19px;background:#1d1d1d;"></div>
<div class="t" style="left:500.5px;top:817px;font-size:13px;color:#d0d0d0;">无</div>
<svg style="left:569px;top:820.5px;" width="11" height="8" viewBox="0 0 11 8"><path d="M1.500 1.500l3.800 3.800 3.800-3.800" fill="none" stroke="#b8b8b8" stroke-width="1.100"/></svg>
<div style="left:0px;top:834px;width:604px;height:19.3px;background:#2e2e2e;"></div>
<div style="left:0px;top:853.3px;width:604px;height:0.7px;background:#222;"></div>
<div style="left:23px;top:836.5px;width:13px;height:13.5px;background:#222222;"></div>
<svg style="left:46px;top:839px;" width="10" height="10" viewBox="0 0 10 10"><path d="M1.500 0.800v8l7.500-4z" fill="#b4b4b4"/></svg>
<div style="left:59px;top:836px;width:15px;height:15.5px;background:#b09d7a;"></div>
<div class="t s" style="left:80px;top:838px;font-size:12.5px;color:#c4c4c4;font-weight:bold;">6</div>
<svg style="left:108.5px;top:836px;" width="17" height="15" viewBox="0 0 17 15"><rect x="0.700" y="1.200" width="15.500" height="12.500" fill="#3a3a3a" stroke="#c4c4c4" stroke-width="1.200"/><rect x="3.500" y="3" width="10" height="9" fill="#cfcfcf"/><circle cx="6.500" cy="5.800" r="2" fill="#3a7bd8"/><rect x="8.500" y="5" width="4" height="4" fill="#e03030"/><path d="M5 11.500l3-4.500 3 4.500z" fill="#2aa04a"/><path d="M2.300 2.500v10M14.700 2.500v10" stroke="#c4c4c4" stroke-width="1" stroke-dasharray="1.200 1"/></svg>
<div class="t s" style="left:132px;top:839.3px;font-size:12px;color:#c8c8c8;font-weight:bold;letter-spacing:0.800px;">预合成 3</div>
<div style="left:338px;top:836.5px;width:12px;height:13.5px;background:#222222;"></div>
<div style="left:353.5px;top:836.5px;width:12px;height:13.5px;background:#222222;"></div>
<div style="left:368.7px;top:836.5px;width:12px;height:13.5px;background:#222222;"></div>
<div style="left:384px;top:836.5px;width:12px;height:13.5px;background:#222222;"></div>
<svg style="left:338px;top:837px;" width="13" height="13" viewBox="0 0 13 13"><path d="M2.200 6.800a3.900 3.900 0 0 1 7.800 0z" fill="none" stroke="#bdbdbd" stroke-width="1.200"/><path d="M6.100 4v6.500M3.800 5.200h4.600M0 9.300h4.200M8 9.300h4.200" fill="none" stroke="#bdbdbd" stroke-width="1.200"/></svg>
<svg style="left:368px;top:837px;" width="13" height="13" viewBox="0 0 13 13"><path d="M1.500 12L12 1.500" stroke="#bdbdbd" stroke-width="1.300"/></svg>
<div style="left:413.5px;top:836.5px;width:12px;height:13.5px;background:#222222;"></div>
<div style="left:428px;top:836.5px;width:12px;height:13.5px;background:#222222;"></div>
<div style="left:443px;top:836.5px;width:12px;height:13.5px;background:#222222;"></div>
<svg style="left:474.5px;top:837px;" width="14" height="14" viewBox="0 0 14 14"><path d="M8.300 7A1.300 1.300 0 0 0 5.700 7A2.600 2.600 0 0 0 10.900 7A3.900 3.900 0 0 0 3.100 7A5.200 5.200 0 0 0 10.900 11.500" fill="none" stroke="#a4a4a4" stroke-width="1.100"/></svg>
<div style="left:494px;top:834.3px;width:89px;height:19px;background:#1d1d1d;"></div>
<div class="t" style="left:500.5px;top:837px;font-size:13px;color:#d0d0d0;">无</div>
<svg style="left:569px;top:840.5px;" width="11" height="8" viewBox="0 0 11 8"><path d="M1.500 1.500l3.800 3.800 3.800-3.800" fill="none" stroke="#b8b8b8" stroke-width="1.100"/></svg>
<div style="left:0px;top:854px;width:604px;height:19.3px;background:#2e2e2e;"></div>
<div style="left:0px;top:873.3px;width:604px;height:0.7px;background:#222;"></div>
<div style="left:23px;top:856.5px;width:13px;height:13.5px;background:#222222;"></div>
<svg style="left:46px;top:859px;" width="10" height="10" viewBox="0 0 10 10"><path d="M1.500 0.800v8l7.500-4z" fill="#b4b4b4"/></svg>
<div style="left:59px;top:856px;width:15px;height:15.5px;background:#b09d7a;"></div>
<div class="t s" style="left:80px;top:858px;font-size:12.5px;color:#c4c4c4;font-weight:bold;">7</div>
<svg style="left:108.5px;top:856px;" width="17" height="15" viewBox="0 0 17 15"><rect x="0.700" y="1.200" width="15.500" height="12.500" fill="#3a3a3a" stroke="#c4c4c4" stroke-width="1.200"/><rect x="3.500" y="3" width="10" height="9" fill="#cfcfcf"/><circle cx="6.500" cy="5.800" r="2" fill="#3a7bd8"/><rect x="8.500" y="5" width="4" height="4" fill="#e03030"/><path d="M5 11.500l3-4.500 3 4.500z" fill="#2aa04a"/><path d="M2.300 2.500v10M14.700 2.500v10" stroke="#c4c4c4" stroke-width="1" stroke-dasharray="1.200 1"/></svg>
<div class="t s" style="left:132px;top:859.3px;font-size:12px;color:#c8c8c8;font-weight:bold;letter-spacing:0.800px;">预合成 4</div>
<div style="left:338px;top:856.5px;width:12px;height:13.5px;background:#222222;"></div>
<div style="left:353.5px;top:856.5px;width:12px;height:13.5px;background:#222222;"></div>
<div style="left:368.7px;top:856.5px;width:12px;height:13.5px;background:#222222;"></div>
<div style="left:384px;top:856.5px;width:12px;height:13.5px;background:#222222;"></div>
<svg style="left:338px;top:857px;" width="13" height="13" viewBox="0 0 13 13"><path d="M2.200 6.800a3.900 3.900 0 0 1 7.800 0z" fill="none" stroke="#bdbdbd" stroke-width="1.200"/><path d="M6.100 4v6.500M3.800 5.200h4.600M0 9.300h4.200M8 9.300h4.200" fill="none" stroke="#bdbdbd" stroke-width="1.200"/></svg>
<svg style="left:368px;top:857px;" width="13" height="13" viewBox="0 0 13 13"><path d="M1.500 12L12 1.500" stroke="#bdbdbd" stroke-width="1.300"/></svg>
<div style="left:413.5px;top:856.5px;width:12px;height:13.5px;background:#222222;"></div>
<div style="left:428px;top:856.5px;width:12px;height:13.5px;background:#222222;"></div>
<div style="left:443px;top:856.5px;width:12px;height:13.5px;background:#222222;"></div>
<svg style="left:474.5px;top:857px;" width="14" height="14" viewBox="0 0 14 14"><path d="M8.300 7A1.300 1.300 0 0 0 5.700 7A2.600 2.600 0 0 0 10.900 7A3.900 3.900 0 0 0 3.100 7A5.200 5.200 0 0 0 10.900 11.500" fill="none" stroke="#a4a4a4" stroke-width="1.100"/></svg>
<div style="left:494px;top:854.3px;width:89px;height:19px;background:#1d1d1d;"></div>
<div class="t" style="left:500.5px;top:857px;font-size:13px;color:#d0d0d0;">无</div>
<svg style="left:569px;top:860.5px;" width="11" height="8" viewBox="0 0 11 8"><path d="M1.500 1.500l3.800 3.800 3.800-3.800" fill="none" stroke="#b8b8b8" stroke-width="1.100"/></svg>
<div style="left:0px;top:874px;width:604px;height:19.3px;background:#2e2e2e;"></div>
<div style="left:0px;top:893.3px;width:604px;height:0.7px;background:#222;"></div>
<div style="left:23px;top:876.5px;width:13px;height:13.5px;background:#222222;"></div>
<svg style="left:46px;top:879px;" width="10" height="10" viewBox="0 0 10 10"><path d="M1.500 0.800v8l7.500-4z" fill="#b4b4b4"/></svg>
<div style="left:59px;top:876px;width:15px;height:15.5px;background:#b09d7a;"></div>
<div class="t s" style="left:80px;top:878px;font-size:12.5px;color:#c4c4c4;font-weight:bold;">8</div>
<svg style="left:108.5px;top:876px;" width="17" height="15" viewBox="0 0 17 15"><rect x="0.700" y="1.200" width="15.500" height="12.500" fill="#3a3a3a" stroke="#c4c4c4" stroke-width="1.200"/><rect x="3.500" y="3" width="10" height="9" fill="#cfcfcf"/><circle cx="6.500" cy="5.800" r="2" fill="#3a7bd8"/><rect x="8.500" y="5" width="4" height="4" fill="#e03030"/><path d="M5 11.500l3-4.500 3 4.500z" fill="#2aa04a"/><path d="M2.300 2.500v10M14.700 2.500v10" stroke="#c4c4c4" stroke-width="1" stroke-dasharray="1.200 1"/></svg>
<div class="t s" style="left:132px;top:879.3px;font-size:12px;color:#c8c8c8;font-weight:bold;letter-spacing:0.800px;">预合成 5</div>
<div style="left:338px;top:876.5px;width:12px;height:13.5px;background:#222222;"></div>
<div style="left:353.5px;top:876.5px;width:12px;height:13.5px;background:#222222;"></div>
<div style="left:368.7px;top:876.5px;width:12px;height:13.5px;background:#222222;"></div>
<div style="left:384px;top:876.5px;width:12px;height:13.5px;background:#222222;"></div>
<svg style="left:338px;top:877px;" width="13" height="13" viewBox="0 0 13 13"><path d="M2.200 6.800a3.900 3.900 0 0 1 7.800 0z" fill="none" stroke="#bdbdbd" stroke-width="1.200"/><path d="M6.100 4v6.500M3.800 5.200h4.600M0 9.300h4.200M8 9.300h4.200" fill="none" stroke="#bdbdbd" stroke-width="1.200"/></svg>
<svg style="left:368px;top:877px;" width="13" height="13" viewBox="0 0 13 13"><path d="M1.500 12L12 1.500" stroke="#bdbdbd" stroke-width="1.300"/></svg>
<div style="left:413.5px;top:876.5px;width:12px;height:13.5px;background:#222222;"></div>
<div style="left:428px;top:876.5px;width:12px;height:13.5px;background:#222222;"></div>
<div style="left:443px;top:876.5px;width:12px;height:13.5px;background:#222222;"></div>
<svg style="left:474.5px;top:877px;" width="14" height="14" viewBox="0 0 14 14"><path d="M8.300 7A1.300 1.300 0 0 0 5.700 7A2.600 2.600 0 0 0 10.900 7A3.900 3.900 0 0 0 3.100 7A5.200 5.200 0 0 0 10.900 11.500" fill="none" stroke="#a4a4a4" stroke-width="1.100"/></svg>
<div style="left:494px;top:874.3px;width:89px;height:19px;background:#1d1d1d;"></div>
<div class="t" style="left:500.5px;top:877px;font-size:13px;color:#d0d0d0;">无</div>
<svg style="left:569px;top:880.5px;" width="11" height="8" viewBox="0 0 11 8"><path d="M1.500 1.500l3.800 3.800 3.800-3.800" fill="none" stroke="#b8b8b8" stroke-width="1.100"/></svg>
<div style="left:0px;top:733px;width:604px;height:20.3px;background:#262626;"></div>
<div style="left:0px;top:733.5px;width:6px;height:19px;background:#1d1d1d;"></div>
<svg style="left:0px;top:738px;" width="6" height="10" viewBox="0 0 6 10"><path d="M-2 0.500L4 5l-6 4.500z" fill="#2d8ceb"/></svg>
<svg style="left:11px;top:738px;" width="9" height="10" viewBox="0 0 9 10"><path d="M1 0.500v9l7-4.500z" fill="#c4c4c4"/></svg>
<div style="left:102px;top:734px;width:16px;height:18.5px;background:#232323;border:1px solid #2c2c2c;"></div>
<svg style="left:103px;top:735px;" width="14" height="16" viewBox="0 0 14 16"><circle cx="7" cy="9.500" r="5" fill="none" stroke="#2d8ceb" stroke-width="1.300"/><path d="M5.500 2.500h3M7 2.500v2M7 9.500l3-3.500" stroke="#2d8ceb" stroke-width="1.200" fill="none"/></svg>
<svg style="left:121px;top:736px;" width="13" height="13" viewBox="0 0 13 13"><path d="M1.500 0.500v11h11" fill="none" stroke="#bdbdbd" stroke-width="1.100"/><path d="M1.500 8.500l3-4 2.500 3 4.500-4.500" fill="none" stroke="#bdbdbd" stroke-width="1.100"/></svg>
<div style="left:138px;top:734px;width:196px;height:19px;background:#3d3d3d;"></div>
<div class="t s" style="left:141.5px;top:737.5px;font-size:11px;color:#a0a0a0;letter-spacing:0.300px;">缩放</div>
<div style="left:337.5px;top:735.5px;width:13px;height:13px;background:#1c1c1c;"></div>
<div class="t s" style="left:355.5px;top:738.5px;font-size:10.5px;color:#3791f0;letter-spacing:0.550px;">100.0, 100.0%</div>
<div style="left:0px;top:894px;width:604px;height:128px;background:#232323;"></div>
<div style="left:0px;top:1015.8px;width:604px;height:1.3px;background:#151515;"></div>
<div style="left:0px;top:1017px;width:604px;height:13px;background:#232323;"></div>
<svg style="left:0px;top:1018px;" width="30" height="12" viewBox="0 0 30 12"><circle cx="2" cy="5" r="4" fill="none" stroke="#bdbdbd" stroke-width="1.300"/><rect x="2.500" y="5.500" width="6.500" height="7" fill="#232323" stroke="#bdbdbd" stroke-width="1.300"/><path d="M20.500 1.500c-2 0-2.200 1-2.200 2.300v1.700c0 1-.8 1.500-2 1.500 1.200 0 2 .5 2 1.500v1.700c0 1.300.2 2.300 2.200 2.300M22.500 1.500c2 0 2.200 1 2.200 2.300v1.700c0 1 .8 1.500 2 1.500-1.200 0-2 .5-2 1.500v1.700c0 1.300-.2 2.300-2.200 2.300" fill="none" stroke="#bdbdbd" stroke-width="2.200"/></svg>
<div style="left:335.5px;top:1018px;width:134px;height:14px;background:#262626;border:1px solid #383838;border-radius:3px;"></div>
<div class="t" style="left:366.5px;top:1020px;font-size:10.5px;color:#9a9a9a;letter-spacing:0.350px;">切换开关/模式</div>
<div style="left:603px;top:659px;width:1.3px;height:371px;background:#151515;"></div>
<div style="left:604.3px;top:659px;width:1268.7px;height:36px;background:#232323;"></div>
<div style="left:609px;top:664px;width:1264px;height:10px;background:#1b1b1b;border-radius:3px 5px 0 3px;"></div>
<div style="left:609px;top:664px;width:1258.5px;height:10px;background:#121212;border-radius:3px 0 0 3px;"></div>
<div style="left:609.5px;top:665px;width:1257.5px;height:8px;background:#3a362f;border-radius:2px 0 0 2px;border:1px solid #443f36;"></div>
<div style="left:641px;top:665px;width:860px;height:8px;background:#686868;"></div>
<div style="left:634.5px;top:665px;width:7px;height:8px;background:#2d8ceb;border-radius:4px 1px 1px 4px;"></div>
<div style="left:1500px;top:665px;width:7px;height:8px;background:#2d8ceb;border-radius:1px 4px 4px 1px;"></div>
<div style="left:1070.5px;top:666px;width:2px;height:6px;background:#3f8ee8;"></div>
<svg style="left:604px;top:664px;" width="1269" height="31" viewBox="0 0 1269 31"><path d="M23.1 25.500V29.500" stroke="#9a9a9a" stroke-width="1"/><text x="8.5" y="20" font-size="10.500" fill="#9c9c9c" font-family="Liberation Sans, sans-serif" letter-spacing="-0.350">00010</text><path d="M84.3 25.500V29.500" stroke="#9a9a9a" stroke-width="1"/><text x="69.7" y="20" font-size="10.500" fill="#9c9c9c" font-family="Liberation Sans, sans-serif" letter-spacing="-0.350">00020</text><path d="M145.5 25.500V29.500" stroke="#9a9a9a" stroke-width="1"/><text x="130.9" y="20" font-size="10.500" fill="#9c9c9c" font-family="Liberation Sans, sans-serif" letter-spacing="-0.350">00030</text><path d="M206.7 25.500V29.500" stroke="#9a9a9a" stroke-width="1"/><text x="192.1" y="20" font-size="10.500" fill="#9c9c9c" font-family="Liberation Sans, sans-serif" letter-spacing="-0.350">00040</text><path d="M267.9 25.500V29.500" stroke="#9a9a9a" stroke-width="1"/><text x="253.3" y="20" font-size="10.500" fill="#9c9c9c" font-family="Liberation Sans, sans-serif" letter-spacing="-0.350">00050</text><path d="M329.1 25.500V29.500" stroke="#9a9a9a" stroke-width="1"/><text x="314.5" y="20" font-size="10.500" fill="#9c9c9c" font-family="Liberation Sans, sans-serif" letter-spacing="-0.350">00060</text><path d="M390.3 25.500V29.500" stroke="#9a9a9a" stroke-width="1"/><text x="375.7" y="20" font-size="10.500" fill="#9c9c9c" font-family="Liberation Sans, sans-serif" letter-spacing="-0.350">00070</text><path d="M451.5 25.500V29.500" stroke="#9a9a9a" stroke-width="1"/><text x="436.9" y="20" font-size="10.500" fill="#9c9c9c" font-family="Liberation Sans, sans-serif" letter-spacing="-0.350">00080</text><path d="M512.7 25.500V29.500" stroke="#9a9a9a" stroke-width="1"/><text x="498.1" y="20" font-size="10.500" fill="#9c9c9c" font-family="Liberation Sans, sans-serif" letter-spacing="-0.350">00090</text><path d="M573.9 25.500V29.500" stroke="#9a9a9a" stroke-width="1"/><text x="559.3" y="20" font-size="10.500" fill="#9c9c9c" font-family="Liberation Sans, sans-serif" letter-spacing="-0.350">00100</text><path d="M635.0 25.500V29.500" stroke="#9a9a9a" stroke-width="1"/><text x="620.5" y="20" font-size="10.500" fill="#9c9c9c" font-family="Liberation Sans, sans-serif" letter-spacing="-0.350">00110</text><path d="M696.2 25.500V29.500" stroke="#9a9a9a" stroke-width="1"/><text x="681.6" y="20" font-size="10.500" fill="#9c9c9c" font-family="Liberation Sans, sans-serif" letter-spacing="-0.350">00120</text><path d="M757.4 25.500V29.500" stroke="#9a9a9a" stroke-width="1"/><text x="742.8" y="20" font-size="10.500" fill="#9c9c9c" font-family="Liberation Sans, sans-serif" letter-spacing="-0.350">00130</text><path d="M818.6 25.500V29.500" stroke="#9a9a9a" stroke-width="1"/><text x="804.0" y="20" font-size="10.500" fill="#9c9c9c" font-family="Liberation Sans, sans-serif" letter-spacing="-0.350">00140</text><path d="M879.8 25.500V29.500" stroke="#9a9a9a" stroke-width="1"/><text x="865.2" y="20" font-size="10.500" fill="#9c9c9c" font-family="Liberation Sans, sans-serif" letter-spacing="-0.350">00150</text><path d="M941.0 25.500V29.500" stroke="#9a9a9a" stroke-width="1"/><text x="926.4" y="20" font-size="10.500" fill="#9c9c9c" font-family="Liberation Sans, sans-serif" letter-spacing="-0.350">00160</text><path d="M1002.2 25.500V29.500" stroke="#9a9a9a" stroke-width="1"/><text x="987.6" y="20" font-size="10.500" fill="#9c9c9c" font-family="Liberation Sans, sans-serif" letter-spacing="-0.350">00170</text><path d="M1063.4 25.500V29.500" stroke="#9a9a9a" stroke-width="1"/><text x="1048.8" y="20" font-size="10.500" fill="#9c9c9c" font-family="Liberation Sans, sans-serif" letter-spacing="-0.350">00180</text><path d="M1124.6 25.500V29.500" stroke="#9a9a9a" stroke-width="1"/><text x="1110.0" y="20" font-size="10.500" fill="#9c9c9c" font-family="Liberation Sans, sans-serif" letter-spacing="-0.350">00190</text><path d="M1185.8 25.500V29.500" stroke="#9a9a9a" stroke-width="1"/><text x="1171.2" y="20" font-size="10.500" fill="#9c9c9c" font-family="Liberation Sans, sans-serif" letter-spacing="-0.350">00200</text><path d="M1247.0 25.500V29.500" stroke="#9a9a9a" stroke-width="1"/><text x="1232.4" y="20" font-size="10.500" fill="#9c9c9c" font-family="Liberation Sans, sans-serif" letter-spacing="-0.350">00210</text></svg>
<div style="left:604.3px;top:694px;width:1268.7px;height:15.3px;background:#606060;"></div>
<div style="left:604.3px;top:693px;width:1268.7px;height:1px;background:#141414;"></div>
<div style="left:604.3px;top:709.3px;width:1268.7px;height:4.3px;background:#151515;"></div>
<div style="left:604.3px;top:710px;width:469.10000000000014px;height:3px;background:#1fc51f;"></div>
<div style="left:1078.7px;top:710px;width:7.2999999999999545px;height:3px;background:#1fc51f;"></div>
<div style="left:1092px;top:710px;width:24px;height:3px;background:#1fc51f;"></div>
<div style="left:1121.8px;top:710px;width:123.20000000000005px;height:3px;background:#1fc51f;"></div>
<div style="left:1245px;top:709.3px;width:85.3px;height:4.3px;background:#242424;"></div>
<div style="left:1330.3px;top:710px;width:542.7px;height:3px;background:#1fc51f;"></div>
<div style="left:604.3px;top:713.6px;width:1268.7px;height:302.4px;background:#323232;"></div>
<div style="left:604.3px;top:714.2px;width:1268.7px;height:19px;background:#3c3c3c;"></div>
<div style="left:604.3px;top:716px;width:1268.7px;height:16.2px;background:#ab9a78;background:linear-gradient(#b3a282,#a39370);border-top:1px solid #cfc4ac;"></div>
<svg style="left:604.3px;top:717px;" width="1268.7" height="15.2" viewBox="0 0 1268.700 15.200"><filter id="nz" x="0" y="0" width="100%" height="100%"><feTurbulence type="fractalNoise" baseFrequency="0.900" numOctaves="2" seed="3"/><feColorMatrix type="matrix" values="0 0 0 0 0.250  0 0 0 0 0.200  0 0 0 0 0.100  1.200 0 0 0 -0.400"/></filter><rect width="1269" height="15.200" filter="url(#nz)"/></svg>
<div style="left:604.3px;top:732.2px;width:1268.7px;height:1.1px;background:#2a2a2a;"></div>
<div style="left:604.3px;top:733.2px;width:1268.7px;height:20.3px;background:#333333;"></div>
<div style="left:604.3px;top:753.4px;width:1268.7px;height:1.1px;background:#2a2a2a;"></div>
<div style="left:604.3px;top:754.5px;width:1268.7px;height:19px;background:#3b3b3b;"></div>
<div style="left:604.3px;top:756.2px;width:1268.7px;height:15.5px;background:#7c3a3a;border-bottom:1px solid #6c3232;"></div>
<div style="left:604.3px;top:773.4000000000001px;width:1268.7px;height:1.1px;background:#2a2a2a;"></div>
<div style="left:604.3px;top:774.4px;width:1268.7px;height:19px;background:#3b3b3b;"></div>
<div style="left:604.3px;top:776.1px;width:1268.7px;height:15.5px;background:#7c3a3a;border-bottom:1px solid #6c3232;"></div>
<div style="left:604.3px;top:793.3000000000001px;width:1268.7px;height:1.1px;background:#2a2a2a;"></div>
<div style="left:604.3px;top:794.4px;width:1268.7px;height:19px;background:#3b3b3b;"></div>
<div style="left:604.3px;top:813.3000000000001px;width:1268.7px;height:1.1px;background:#2a2a2a;"></div>
<div style="left:604.3px;top:796.1px;width:1268.7px;height:15.5px;background:#4b4741;border-top:1px solid #665f50;border-bottom:1px solid #5e584b;"></div>
<div style="left:604.3px;top:796.1px;width:52.700000000000045px;height:15.5px;background:#746b5a;border-right:1px solid #3a3a3a;border-top:1px solid #81786a;"></div>
<div style="left:604.3px;top:814.4px;width:1268.7px;height:19px;background:#3b3b3b;"></div>
<div style="left:604.3px;top:833.3000000000001px;width:1268.7px;height:1.1px;background:#2a2a2a;"></div>
<div style="left:657.4px;top:816.1px;width:1215.6px;height:15.5px;background:#4b4741;border-top:1px solid #665f50;border-bottom:1px solid #5e584b;"></div>
<div style="left:657.4px;top:816.1px;width:6px;height:6px;background:#3a3a3a;"></div>
<div style="left:657.4px;top:816.1px;width:91.60000000000002px;height:15.5px;background:#746b5a;border-radius:5px 0 0 0;border-right:1px solid #3a3a3a;border-top:1px solid #81786a;"></div>
<div style="left:604.3px;top:834.4px;width:1268.7px;height:19px;background:#3b3b3b;"></div>
<div style="left:604.3px;top:853.3000000000001px;width:1268.7px;height:1.1px;background:#2a2a2a;"></div>
<div style="left:749px;top:836.1px;width:1124px;height:15.5px;background:#4b4741;border-top:1px solid #665f50;border-bottom:1px solid #5e584b;"></div>
<div style="left:749px;top:836.1px;width:6px;height:6px;background:#3a3a3a;"></div>
<div style="left:749px;top:836.1px;width:91.79999999999995px;height:15.5px;background:#746b5a;border-radius:5px 0 0 0;border-right:1px solid #3a3a3a;border-top:1px solid #81786a;"></div>
<div style="left:604.3px;top:854.4px;width:1268.7px;height:19px;background:#3b3b3b;"></div>
<div style="left:604.3px;top:873.3000000000001px;width:1268.7px;height:1.1px;background:#2a2a2a;"></div>
<div style="left:841.5px;top:856.1px;width:1031.5px;height:15.5px;background:#4b4741;border-top:1px solid #665f50;border-bottom:1px solid #5e584b;"></div>
<div style="left:841.5px;top:856.1px;width:6px;height:6px;background:#3a3a3a;"></div>
<div style="left:841.5px;top:856.1px;width:91.70000000000005px;height:15.5px;background:#746b5a;border-radius:5px 0 0 0;border-right:1px solid #3a3a3a;border-top:1px solid #81786a;"></div>
<div style="left:604.3px;top:874.4px;width:1268.7px;height:19px;background:#3b3b3b;"></div>
<div style="left:604.3px;top:893.3000000000001px;width:1268.7px;height:1.1px;background:#2a2a2a;"></div>
<div style="left:933.2px;top:876.1px;width:939.8px;height:15.5px;background:#4b4741;border-top:1px solid #665f50;border-bottom:1px solid #5e584b;"></div>
<div style="left:933.2px;top:876.1px;width:6px;height:6px;background:#3a3a3a;"></div>
<div style="left:933.2px;top:876.1px;width:91.0px;height:15.5px;background:#746b5a;border-radius:5px 0 0 0;border-right:1px solid #3a3a3a;border-top:1px solid #81786a;"></div>
<div style="left:604.3px;top:894.4px;width:1268.7px;height:121.6px;background:#323232;"></div>
<svg style="left:682.995px;top:737.5px;" width="10" height="10" viewBox="0 0 10 10"><path d="M5 0.500L9.500 5 5 9.500 0.500 5z" fill="#2d8ceb"/></svg>
<svg style="left:731.951px;top:737.5px;" width="10" height="10" viewBox="0 0 10 10"><path d="M5 0.500L9.500 5 5 9.500 0.500 5z" fill="#2d8ceb"/></svg>
<svg style="left:774.7874999999999px;top:737.5px;" width="10" height="10" viewBox="0 0 10 10"><path d="M5 0.500L9.500 5 5 9.500 0.500 5z" fill="#2d8ceb"/></svg>
<svg style="left:866.5799999999999px;top:737.5px;" width="10" height="10" viewBox="0 0 10 10"><path d="M5 0.500L9.500 5 5 9.500 0.500 5z" fill="#bdbdbd"/></svg>
<svg style="left:915.536px;top:737.5px;" width="10" height="10" viewBox="0 0 10 10"><path d="M5 0.500L9.500 5 5 9.500 0.500 5z" fill="#bdbdbd"/></svg>
<svg style="left:958.3725px;top:737.5px;" width="10" height="10" viewBox="0 0 10 10"><path d="M5 0.500L9.500 5 5 9.500 0.500 5z" fill="#bdbdbd"/></svg>
<svg style="left:1050.165px;top:737.5px;" width="10" height="10" viewBox="0 0 10 10"><path d="M5 0.500L9.500 5 5 9.500 0.500 5z" fill="#bdbdbd"/></svg>
<svg style="left:1099.121px;top:737.5px;" width="10" height="10" viewBox="0 0 10 10"><path d="M5 0.500L9.500 5 5 9.500 0.500 5z" fill="#bdbdbd"/></svg>
<svg style="left:1141.9575px;top:737.5px;" width="10" height="10" viewBox="0 0 10 10"><path d="M5 0.500L9.500 5 5 9.500 0.500 5z" fill="#bdbdbd"/></svg>
<svg style="left:1233.75px;top:737.5px;" width="10" height="10" viewBox="0 0 10 10"><path d="M5 0.500L9.500 5 5 9.500 0.500 5z" fill="#bdbdbd"/></svg>
<svg style="left:1282.7060000000001px;top:737.5px;" width="10" height="10" viewBox="0 0 10 10"><path d="M5 0.500L9.500 5 5 9.500 0.500 5z" fill="#bdbdbd"/></svg>
<svg style="left:1325.5425px;top:737.5px;" width="10" height="10" viewBox="0 0 10 10"><path d="M5 0.500L9.500 5 5 9.500 0.500 5z" fill="#bdbdbd"/><path d="M5 0.500L9.500 5 5 9.500z" fill="#777" /></svg>
<svg style="left:682.995px;top:737.5px;" width="5" height="10" viewBox="0 0 5 10"><path d="M5 0.500L0.500 5 5 9.500z" fill="#1d5fae"/></svg>
<div style="left:671px;top:730.3px;width:139.5px;height:29px;border:2px solid #e3242b;"></div>
<div style="left:1873px;top:659px;width:19px;height:371px;background:#232323;"></div>
<div style="left:1873px;top:712.8px;width:17px;height:1.2px;background:#111;"></div>
<div style="left:1891px;top:632px;width:1px;height:398px;background:#161616;"></div>
<div style="left:1889.6px;top:631px;width:1.4px;height:399px;background:#2d86e0;"></div>
<svg style="left:1874px;top:695.5px;" width="18" height="16" viewBox="0 0 18 16"><path d="M3 1.200h11v8l-5.500 5L3 9.200z" fill="#bdbdbd"/></svg>
<svg style="left:1872px;top:716px;" width="20" height="16" viewBox="0 0 20 16"><path d="M9 2h9v8H9zM1 11l8-8v6z" fill="#bdbdbd"/><circle cx="7.500" cy="11.500" r="2.800" fill="#232323" stroke="#bdbdbd" stroke-width="1.100"/></svg>
<div style="left:604.3px;top:1015.8px;width:1287.7px;height:1.3px;background:#151515;"></div>
<div style="left:604.3px;top:1017px;width:1287.7px;height:13px;background:#232323;"></div>
<svg style="left:606px;top:1018px;" width="120" height="12" viewBox="0 0 120 12"><path d="M3 8l3-3 1.500 1.500 2-2.300 3.500 3.800z" fill="#bdbdbd"/><path d="M30 7h40" stroke="#4a4a4a" stroke-width="1.500"/><circle cx="45" cy="7.500" r="3.600" fill="#232323" stroke="#d0d0d0" stroke-width="1.500"/><path d="M84 10l4-5h1.500l-3.500 5zM88 10l6-6.500 6 6.500z" fill="#bdbdbd"/></svg>
<div style="left:711px;top:1017px;width:30px;height:13px;background:#1c1c1c;"></div>
<div style="left:741px;top:1017.3px;width:795px;height:14px;background:#303030;border-radius:8px 8px 0 0;"></div>
<div style="left:1238.8px;top:692px;width:1.4px;height:324px;background:#3d8be0;"></div>
<svg style="left:1233px;top:678px;" width="14" height="16" viewBox="0 0 14 16"><path d="M1.300 1h10.600v6.200l-5.300 7.500L1.300 7.200z" fill="#3392ee"/><path d="M5.300 7h2.600M6.600 7v7" stroke="#2a2a2a" stroke-width="0.800"/></svg>
<svg style="left:0px;top:0px;pointer-events:none;" width="1892" height="1030" viewBox="0 0 1892 1030"><path d="M977.0 628.0L940.0 691.8" stroke="#e3242b" stroke-width="3" stroke-linecap="round"/><path d="M933.5 703.0L935.3 689.0L944.8 694.5Z" fill="#e3242b"/><path d="M1161.0 626.0L1132.1 694.0" stroke="#e3242b" stroke-width="3" stroke-linecap="round"/><path d="M1127.0 706.0L1127.0 691.9L1137.1 696.2Z" fill="#e3242b"/><path d="M1344.0 644.0L1311.6 689.4" stroke="#e3242b" stroke-width="3" stroke-linecap="round"/><path d="M1304.0 700.0L1307.1 686.2L1316.0 692.6Z" fill="#e3242b"/><path d="M1286.0 330.0L1329.7 277.0" stroke="#e3242b" stroke-width="3" stroke-linecap="round"/><path d="M1338.0 267.0L1334.0 280.5L1325.5 273.5Z" fill="#e3242b"/></svg>
<svg style="left:1709px;top:825px;" width="52" height="52" viewBox="0 0 52 52"><circle cx="26" cy="26" r="24" fill="#fff" stroke="#2a8af0" stroke-width="2"/><circle cx="26" cy="26" r="21.800" fill="none" stroke="#111" stroke-width="0.900"/><path d="M22 21c0-2 8-2 8 0l-1 7c-.5 3-5.500 3-6 0z" fill="#111"/><path d="M22.500 21l-3-1.500M29.500 21l3-1.500" stroke="#111" stroke-width="1.500"/><path d="M23 20c-3-1-6-3-6.500-7M19 17.500c-1.500-1-3-1.500-4-3M20 18c0-2-.5-4 .5-5.500M29 20c3-1 6-3 6.500-7M33 17.500c1.500-1 3-1.500 4-3M32 18c0-2 .5-4-.5-5.500" fill="none" stroke="#111" stroke-width="1.400" stroke-linecap="round"/><text x="26" y="41" text-anchor="middle" font-family="Liberation Serif, Noto Serif CJK SC, serif" font-weight="bold" font-size="6.500" fill="#111">行鹿君</text></svg>
</div></body></html>
